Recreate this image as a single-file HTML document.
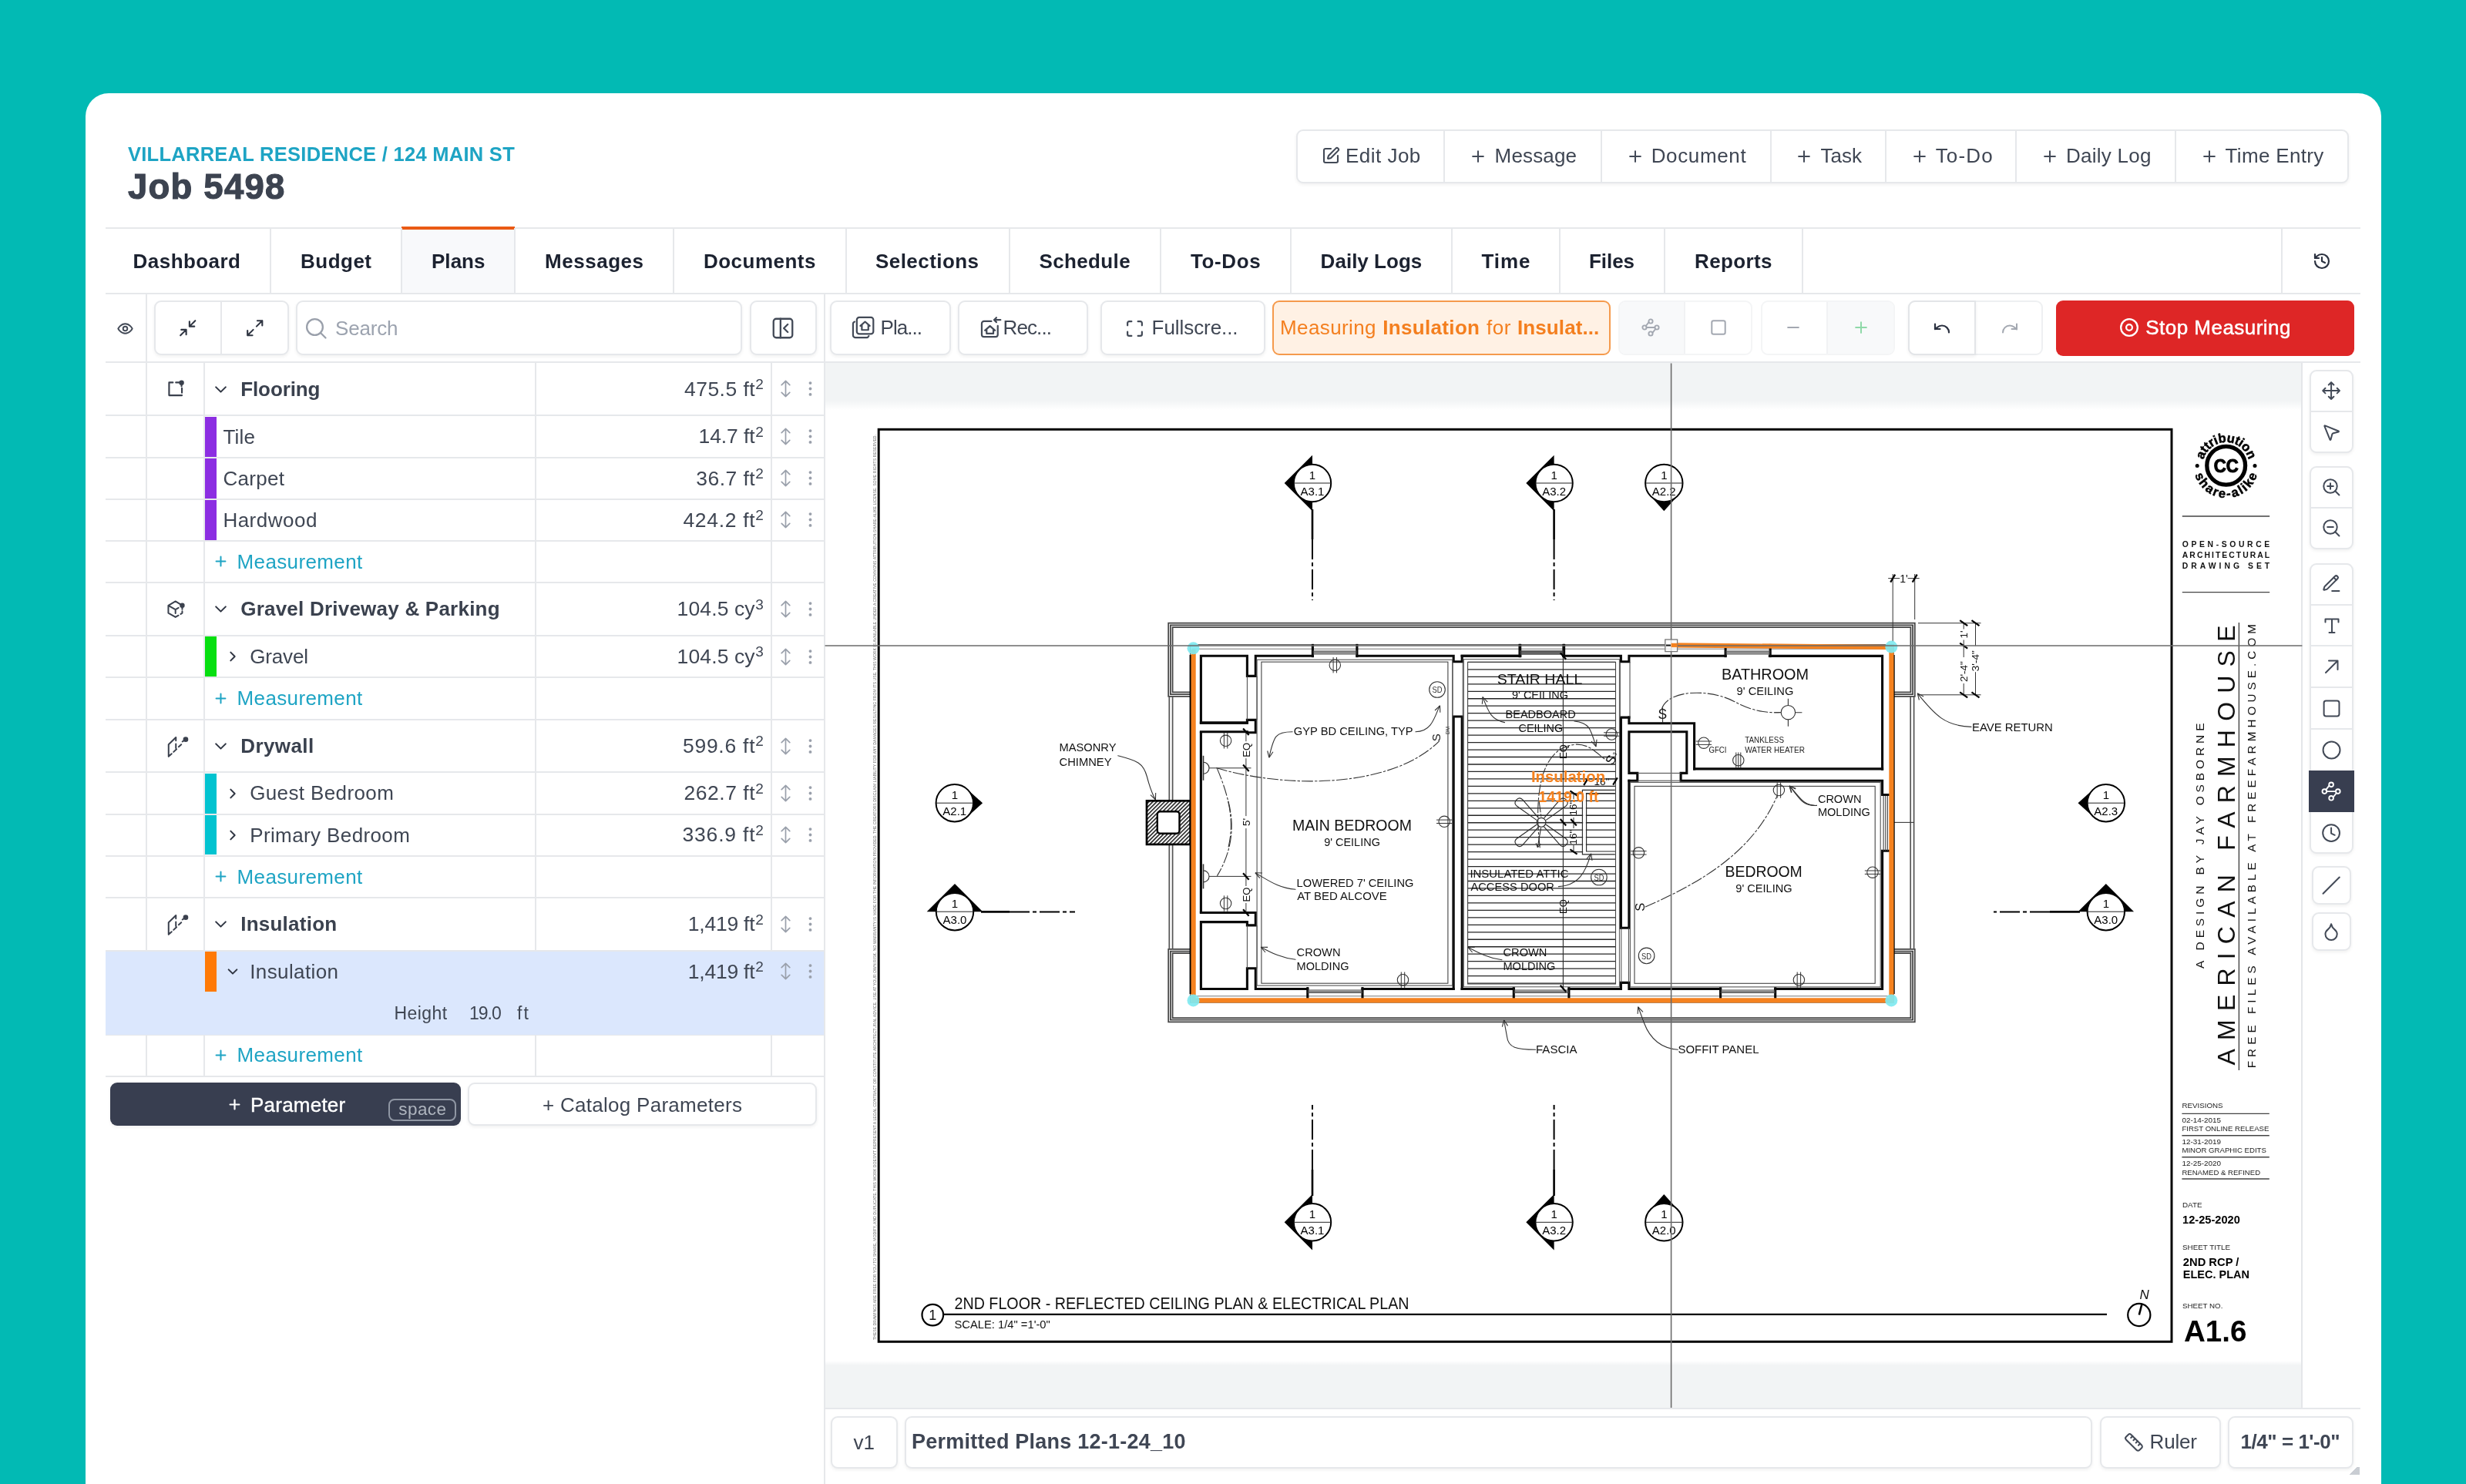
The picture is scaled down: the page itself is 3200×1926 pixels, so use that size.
<!DOCTYPE html>
<html lang="en"><head><meta charset="utf-8"><title>Job 5498 - Plans</title><style>
html,body{margin:0;padding:0;}
html{width:3200px;height:1926px;overflow:hidden;}
body{width:3200px;height:1926px;overflow:hidden;background:#02bab4;font-family:'Liberation Sans', sans-serif;position:relative;}
.b{position:absolute;box-sizing:border-box;}
.t{position:absolute;white-space:pre;font-family:'Liberation Sans', sans-serif;}
.i{position:absolute;overflow:visible;}
#dw{position:absolute;left:0;top:0;}
#root{position:absolute;left:0;top:0;width:3200px;height:1926px;overflow:hidden;will-change:transform;}
</style></head>
<body>
<div id="root">
<div class="b" style="left:111.0px;top:121.0px;width:2979.0px;height:1869.0px;background:#ffffff;border-radius:30px;"></div>
<div class="b" style="left:1682.0px;top:167.5px;width:1365.5px;height:70.0px;background:#fff;border:2px solid #e6e8eb;border-radius:9px;box-shadow:0 2px 4px rgba(0,0,0,0.06);"></div>
<div class="b" style="left:1873.3px;top:169.0px;width:2.0px;height:67.0px;background:#e6e8eb;"></div>
<div class="b" style="left:2077.0px;top:169.0px;width:2.0px;height:67.0px;background:#e6e8eb;"></div>
<div class="b" style="left:2296.6px;top:169.0px;width:2.0px;height:67.0px;background:#e6e8eb;"></div>
<div class="b" style="left:2445.8px;top:169.0px;width:2.0px;height:67.0px;background:#e6e8eb;"></div>
<div class="b" style="left:2615.0px;top:169.0px;width:2.0px;height:67.0px;background:#e6e8eb;"></div>
<div class="b" style="left:2822.0px;top:169.0px;width:2.0px;height:67.0px;background:#e6e8eb;"></div>
<div class="b" style="left:137.0px;top:294.6px;width:2926.0px;height:2.0px;background:#e6e8eb;"></div>
<div class="b" style="left:137.0px;top:379.8px;width:2926.0px;height:2.0px;background:#e6e8eb;"></div>
<div class="b" style="left:521.0px;top:296.6px;width:147.4px;height:83.4px;background:#f8f9fb;"></div>
<div class="b" style="left:521.0px;top:293.6px;width:147.4px;height:4.0px;background:#ea5a14;"></div>
<div class="b" style="left:350.0px;top:296.0px;width:2.0px;height:84.0px;background:#e6e8eb;"></div>
<div class="b" style="left:520.0px;top:296.0px;width:2.0px;height:84.0px;background:#e6e8eb;"></div>
<div class="b" style="left:667.4px;top:296.0px;width:2.0px;height:84.0px;background:#e6e8eb;"></div>
<div class="b" style="left:872.5px;top:296.0px;width:2.0px;height:84.0px;background:#e6e8eb;"></div>
<div class="b" style="left:1097.0px;top:296.0px;width:2.0px;height:84.0px;background:#e6e8eb;"></div>
<div class="b" style="left:1308.5px;top:296.0px;width:2.0px;height:84.0px;background:#e6e8eb;"></div>
<div class="b" style="left:1504.5px;top:296.0px;width:2.0px;height:84.0px;background:#e6e8eb;"></div>
<div class="b" style="left:1673.7px;top:296.0px;width:2.0px;height:84.0px;background:#e6e8eb;"></div>
<div class="b" style="left:1882.6px;top:296.0px;width:2.0px;height:84.0px;background:#e6e8eb;"></div>
<div class="b" style="left:2022.7px;top:296.0px;width:2.0px;height:84.0px;background:#e6e8eb;"></div>
<div class="b" style="left:2159.0px;top:296.0px;width:2.0px;height:84.0px;background:#e6e8eb;"></div>
<div class="b" style="left:2337.5px;top:296.0px;width:2.0px;height:84.0px;background:#e6e8eb;"></div>
<div class="b" style="left:2959.8px;top:296.0px;width:2.0px;height:84.0px;background:#e6e8eb;"></div>
<div class="b" style="left:137.0px;top:469.4px;width:2926.0px;height:2.0px;background:#e6e8eb;"></div>
<div class="b" style="left:189.0px;top:381.0px;width:2.0px;height:1016.0px;background:#e6e8eb;"></div>
<div class="b" style="left:1068.6px;top:381.0px;width:2.0px;height:1545.0px;background:#e6e8eb;"></div>
<div class="b" style="left:199.8px;top:390.4px;width:175.0px;height:70.8px;background:#fff;border:2px solid #e6e8eb;border-radius:9px;box-shadow:0 2px 4px rgba(0,0,0,0.06);"></div>
<div class="b" style="left:286.3px;top:392.4px;width:2.0px;height:66.8px;background:#e6e8eb;"></div>
<div class="b" style="left:384.0px;top:390.4px;width:578.6px;height:70.8px;background:#fff;border:2px solid #e6e8eb;border-radius:9px;box-shadow:0 2px 4px rgba(0,0,0,0.06);"></div>
<div class="b" style="left:973.2px;top:390.4px;width:86.8px;height:70.8px;background:#fff;border:2px solid #e6e8eb;border-radius:9px;box-shadow:0 2px 4px rgba(0,0,0,0.06);"></div>
<div class="b" style="left:1077.3px;top:390.2px;width:157.0px;height:70.8px;background:#fff;border:2px solid #e6e8eb;border-radius:9px;box-shadow:0 2px 4px rgba(0,0,0,0.06);"></div>
<div class="b" style="left:1243.2px;top:390.2px;width:168.6px;height:70.8px;background:#fff;border:2px solid #e6e8eb;border-radius:9px;box-shadow:0 2px 4px rgba(0,0,0,0.06);"></div>
<div class="b" style="left:1427.7px;top:390.2px;width:214.2px;height:70.8px;background:#fff;border:2px solid #e6e8eb;border-radius:9px;box-shadow:0 2px 4px rgba(0,0,0,0.06);"></div>
<div class="b" style="left:1651.0px;top:390.2px;width:438.6px;height:70.8px;background:#fff1e4;border:2.5px solid #f59a4c;border-radius:9px;"></div>
<div class="b" style="left:2100.0px;top:390.2px;width:174.0px;height:70.8px;background:#fff;border:2px solid #f4f5f6;border-radius:9px;"></div>
<div class="b" style="left:2102.0px;top:392.2px;width:84.0px;height:66.8px;background:#f8f9fa;border-radius:7px 0 0 7px;"></div>
<div class="b" style="left:2185.0px;top:392.0px;width:2.0px;height:67.0px;background:#f1f2f4;"></div>
<div class="b" style="left:2284.5px;top:390.2px;width:174.5px;height:70.8px;background:#fff;border:2px solid #f4f5f6;border-radius:9px;"></div>
<div class="b" style="left:2371.0px;top:392.2px;width:86.0px;height:66.8px;background:#f8f9fa;border-radius:0 7px 7px 0;"></div>
<div class="b" style="left:2370.0px;top:392.0px;width:2.0px;height:67.0px;background:#f1f2f4;"></div>
<div class="b" style="left:2475.6px;top:390.2px;width:175.7px;height:70.8px;background:#fff;border:2px solid #eef0f2;border-radius:9px;"></div>
<div class="b" style="left:2475.6px;top:390.2px;width:88.7px;height:70.8px;background:#fff;border:2px solid #e3e5e8;border-radius:9px 0 0 9px;box-shadow:0 2px 4px rgba(0,0,0,0.06);"></div>
<div class="b" style="left:2667.8px;top:389.6px;width:387.6px;height:72.2px;background:#de2626;border-radius:9px;"></div>
<div class="b" style="left:137.0px;top:538.4px;width:932.0px;height:2.0px;background:#e6e8eb;"></div>
<div class="b" style="left:137.0px;top:592.8px;width:932.0px;height:2.0px;background:#e6e8eb;"></div>
<div class="b" style="left:137.0px;top:646.8px;width:932.0px;height:2.0px;background:#e6e8eb;"></div>
<div class="b" style="left:137.0px;top:701.0px;width:932.0px;height:2.0px;background:#e6e8eb;"></div>
<div class="b" style="left:137.0px;top:754.9px;width:932.0px;height:2.0px;background:#e6e8eb;"></div>
<div class="b" style="left:137.0px;top:823.8px;width:932.0px;height:2.0px;background:#e6e8eb;"></div>
<div class="b" style="left:137.0px;top:878.2px;width:932.0px;height:2.0px;background:#e6e8eb;"></div>
<div class="b" style="left:137.0px;top:932.6px;width:932.0px;height:2.0px;background:#e6e8eb;"></div>
<div class="b" style="left:137.0px;top:1001.3px;width:932.0px;height:2.0px;background:#e6e8eb;"></div>
<div class="b" style="left:137.0px;top:1055.7px;width:932.0px;height:2.0px;background:#e6e8eb;"></div>
<div class="b" style="left:137.0px;top:1109.6px;width:932.0px;height:2.0px;background:#e6e8eb;"></div>
<div class="b" style="left:137.0px;top:1164.0px;width:932.0px;height:2.0px;background:#e6e8eb;"></div>
<div class="b" style="left:137.0px;top:1232.5px;width:932.0px;height:2.0px;background:#e6e8eb;"></div>
<div class="b" style="left:137.0px;top:1287.0px;width:932.0px;height:2.0px;background:#e6e8eb;"></div>
<div class="b" style="left:137.0px;top:1341.5px;width:932.0px;height:2.0px;background:#e6e8eb;"></div>
<div class="b" style="left:137.0px;top:1395.5px;width:932.0px;height:2.0px;background:#e6e8eb;"></div>
<div class="b" style="left:137.0px;top:1234.5px;width:932.0px;height:108.0px;background:#dbe7fd;"></div>
<div class="b" style="left:264.0px;top:471.0px;width:2.0px;height:763.0px;background:#e6e8eb;"></div>
<div class="b" style="left:264.0px;top:1342.5px;width:2.0px;height:54.5px;background:#e6e8eb;"></div>
<div class="b" style="left:693.6px;top:471.0px;width:2.0px;height:763.0px;background:#e6e8eb;"></div>
<div class="b" style="left:693.6px;top:1342.5px;width:2.0px;height:54.5px;background:#e6e8eb;"></div>
<div class="b" style="left:1000.3px;top:471.0px;width:2.0px;height:763.0px;background:#e6e8eb;"></div>
<div class="b" style="left:1000.3px;top:1342.5px;width:2.0px;height:54.5px;background:#e6e8eb;"></div>
<div class="b" style="left:266.0px;top:540.6px;width:14.6px;height:52.0px;background:#8c2ee2;"></div>
<div class="b" style="left:266.0px;top:595.0px;width:14.6px;height:51.6px;background:#8c2ee2;"></div>
<div class="b" style="left:266.0px;top:649.0px;width:14.6px;height:51.8px;background:#8c2ee2;"></div>
<div class="b" style="left:266.0px;top:826.0px;width:14.6px;height:52.0px;background:#06df10;"></div>
<div class="b" style="left:266.0px;top:1003.5px;width:14.6px;height:52.0px;background:#02c3d0;"></div>
<div class="b" style="left:266.0px;top:1057.9px;width:14.6px;height:51.5px;background:#02c3d0;"></div>
<div class="b" style="left:266.0px;top:1234.7px;width:14.6px;height:52.1px;background:#ff7a06;"></div>
<div class="b" style="left:142.6px;top:1405.4px;width:455.4px;height:55.2px;background:#383e50;border-radius:9px;box-shadow:0 2px 4px rgba(0,0,0,0.06);"></div>
<div class="b" style="left:503.6px;top:1426.2px;width:88.6px;height:29.2px;background:transparent;border:2px solid #8f96a3;border-radius:8px;"></div>
<div class="b" style="left:607.0px;top:1405.4px;width:453.0px;height:55.2px;background:#fff;border:2px solid #e6e8eb;border-radius:9px;box-shadow:0 2px 4px rgba(0,0,0,0.06);"></div>
<div class="b" style="left:1070.6px;top:471.4px;width:1916.8px;height:1355.6px;background:#f2f4f5;"></div>
<div class="b" style="left:1070.6px;top:520.0px;width:1916.8px;height:1252.0px;background:#ffffff;background:linear-gradient(#f2f4f5 0,#fff 12px,#fff calc(100% - 6px),#f2f4f5 100%);"></div>
<div class="b" style="left:2986.4px;top:471.0px;width:2.0px;height:1356.0px;background:#e4e6e9;"></div>
<div class="b" style="left:1069.0px;top:1826.6px;width:1994.0px;height:2.0px;background:#e6e8eb;"></div>
<div class="b" style="left:1077.6px;top:1838.0px;width:87.8px;height:67.8px;background:#fff;border:2px solid #e6e8eb;border-radius:9px;box-shadow:0 2px 4px rgba(0,0,0,0.06);"></div>
<div class="b" style="left:1174.2px;top:1838.0px;width:1541.0px;height:67.8px;background:#fff;border:2px solid #e6e8eb;border-radius:9px;box-shadow:0 2px 4px rgba(0,0,0,0.06);"></div>
<div class="b" style="left:2725.0px;top:1838.0px;width:156.7px;height:67.8px;background:#fff;border:2px solid #e6e8eb;border-radius:9px;box-shadow:0 2px 4px rgba(0,0,0,0.06);"></div>
<div class="b" style="left:2890.6px;top:1838.0px;width:163.7px;height:67.8px;background:#fff;border:2px solid #e6e8eb;border-radius:9px;box-shadow:0 2px 4px rgba(0,0,0,0.06);"></div>
<div class="b" style="left:2996.6px;top:479.6px;width:57.8px;height:108.0px;background:#fff;border:2px solid #e6e8eb;border-radius:9px;box-shadow:0 2px 4px rgba(0,0,0,0.06);"></div>
<div class="b" style="left:2998.0px;top:532.5px;width:55.0px;height:2.0px;background:#e6e8eb;"></div>
<div class="b" style="left:2996.6px;top:605.0px;width:57.8px;height:107.8px;background:#fff;border:2px solid #e6e8eb;border-radius:9px;box-shadow:0 2px 4px rgba(0,0,0,0.06);"></div>
<div class="b" style="left:2998.0px;top:658.0px;width:55.0px;height:2.0px;background:#e6e8eb;"></div>
<div class="b" style="left:2996.6px;top:730.6px;width:57.8px;height:377.4px;background:#fff;border:2px solid #e6e8eb;border-radius:9px;box-shadow:0 2px 4px rgba(0,0,0,0.06);"></div>
<div class="b" style="left:2998.0px;top:783.5px;width:55.0px;height:2.0px;background:#e6e8eb;"></div>
<div class="b" style="left:2998.0px;top:837.4px;width:55.0px;height:2.0px;background:#e6e8eb;"></div>
<div class="b" style="left:2998.0px;top:891.3px;width:55.0px;height:2.0px;background:#e6e8eb;"></div>
<div class="b" style="left:2998.0px;top:945.2px;width:55.0px;height:2.0px;background:#e6e8eb;"></div>
<div class="b" style="left:2995.6px;top:999.6px;width:59.8px;height:54.4px;background:#383e50;"></div>
<div class="b" style="left:3000.4px;top:1124.3px;width:50.6px;height:49.9px;background:#fff;border:2px solid #e6e8eb;border-radius:9px;box-shadow:0 2px 4px rgba(0,0,0,0.06);"></div>
<div class="b" style="left:3000.4px;top:1184.0px;width:50.6px;height:50.4px;background:#fff;border:2px solid #e6e8eb;border-radius:9px;box-shadow:0 2px 4px rgba(0,0,0,0.06);"></div>
<svg id="dw" width="3200" height="1926" viewBox="0 0 3200 1926" font-family="'Liberation Sans', sans-serif" fill="none"><defs><pattern id="ht" width="3.6" height="3.6" patternUnits="userSpaceOnUse" patternTransform="rotate(-45)"><rect width="3.6" height="3.6" fill="#fff"/><rect width="3.6" height="1.5" fill="#111"/></pattern><clipPath id="cv"><rect x="1070.6" y="471.4" width="1916.8" height="1355.6"/></clipPath></defs><g clip-path="url(#cv)"><rect x="1140.2" y="557.3" width="1677.8" height="1184" stroke="#050505" stroke-width="3" fill="none"/>
<text x="1136.6" y="1739.0" font-size="4.6" font-weight="400" text-anchor="start" fill="#6e6e6e" textLength="1175.0" lengthAdjust="spacingAndGlyphs" transform="rotate(-90 1136.6 1739.0)">THESE DRAWINGS ARE FREE FOR YOU TO SHARE, MODIFY, AND DUPLICATE.  THIS WORK DOESN'T REPRESENT A LEGAL CONTRACT OR CONSTITUTE ARCHITECTURAL ADVICE.  USE AT YOUR OWN RISK.  NO WARRANTY IS MADE FOR THE INFORMATION PROVIDED.  THE CREATORS DISCLAIM LIABILITY FOR ANY DAMAGES RESULTING FROM ITS USE.  THIS WORK IS AVAILABLE UNDER A CREATIVE COMMONS ATTRIBUTION-SHARE-ALIKE LICENSE.  SOME RIGHTS RESERVED.</text>
<circle cx="1210.3" cy="1706.6" r="13.8" fill="#fff" stroke="#000" stroke-width="2.2"/>
<text x="1210.3" y="1713.2" font-size="18" font-weight="400" text-anchor="middle" fill="#111">1</text>
<path d="M1224 1705.9H2734" stroke="#000" stroke-width="2.2"/>
<text x="1238.5" y="1698.9" font-size="21.3" font-weight="400" text-anchor="start" fill="#111" textLength="590.0" lengthAdjust="spacingAndGlyphs">2ND FLOOR - REFLECTED CEILING PLAN &amp; ELECTRICAL PLAN</text>
<text x="1238.5" y="1723.8" font-size="14.8" font-weight="400" text-anchor="start" fill="#111" textLength="124.3" lengthAdjust="spacingAndGlyphs">SCALE: 1/4" =1'-0"</text>
<circle cx="2775.8" cy="1706.5" r="14.6" stroke="#000" stroke-width="2.2" fill="none"/>
<path d="M2775.8 1706.5L2779.3 1693" stroke="#000" stroke-width="2.6"/>
<text x="2776.5" y="1685.6" font-size="17" font-weight="400" text-anchor="start" fill="#111" font-style="italic">N</text>
<path d="M1703.0 590.7L1666.7 627.0L1703.0 663.3Z" fill="#000"/>
<circle cx="1703.0" cy="627.0" r="24.2" fill="#fff" stroke="#000" stroke-width="2"/>
<path d="M1678.8 627.0H1727.2" stroke="#222" stroke-width="1"/>
<text x="1703.0" y="621.5" font-size="15" font-weight="400" text-anchor="middle" fill="#000">1</text>
<text x="1703.0" y="642.6" font-size="15" font-weight="400" text-anchor="middle" fill="#000">A3.1</text>
<path d="M1703 661V700" stroke="#000" stroke-width="2.6"/>
<path d="M1703 700V779" stroke="#000" stroke-width="2" stroke-dasharray="26 4 5 4"/>
<path d="M1703.0 1550.0L1666.7 1586.3L1703.0 1622.6Z" fill="#000"/>
<circle cx="1703.0" cy="1586.3" r="24.2" fill="#fff" stroke="#000" stroke-width="2"/>
<path d="M1678.8 1586.3H1727.2" stroke="#222" stroke-width="1"/>
<text x="1703.0" y="1580.8" font-size="15" font-weight="400" text-anchor="middle" fill="#000">1</text>
<text x="1703.0" y="1601.9" font-size="15" font-weight="400" text-anchor="middle" fill="#000">A3.1</text>
<path d="M1703 1552V1518" stroke="#000" stroke-width="2.6"/>
<path d="M1703 1518V1434" stroke="#000" stroke-width="2" stroke-dasharray="26 4 5 4"/>
<path d="M2016.6 590.7L1980.3 627.0L2016.6 663.3Z" fill="#000"/>
<circle cx="2016.6" cy="627.0" r="24.2" fill="#fff" stroke="#000" stroke-width="2"/>
<path d="M1992.4 627.0H2040.8" stroke="#222" stroke-width="1"/>
<text x="2016.6" y="621.5" font-size="15" font-weight="400" text-anchor="middle" fill="#000">1</text>
<text x="2016.6" y="642.6" font-size="15" font-weight="400" text-anchor="middle" fill="#000">A3.2</text>
<path d="M2016.6 661V700" stroke="#000" stroke-width="2.6"/>
<path d="M2016.6 700V779" stroke="#000" stroke-width="2" stroke-dasharray="26 4 5 4"/>
<path d="M2016.6 1550.0L1980.3 1586.3L2016.6 1622.6Z" fill="#000"/>
<circle cx="2016.6" cy="1586.3" r="24.2" fill="#fff" stroke="#000" stroke-width="2"/>
<path d="M1992.4 1586.3H2040.8" stroke="#222" stroke-width="1"/>
<text x="2016.6" y="1580.8" font-size="15" font-weight="400" text-anchor="middle" fill="#000">1</text>
<text x="2016.6" y="1601.9" font-size="15" font-weight="400" text-anchor="middle" fill="#000">A3.2</text>
<path d="M2016.6 1552V1518" stroke="#000" stroke-width="2.6"/>
<path d="M2016.6 1518V1434" stroke="#000" stroke-width="2" stroke-dasharray="26 4 5 4"/>
<path d="M2137.5 639.1L2159.3 663.3L2181.1 639.1Z" fill="#000"/>
<circle cx="2159.3" cy="627.0" r="24.2" fill="#fff" stroke="#000" stroke-width="2"/>
<path d="M2135.1 627.0H2183.5" stroke="#222" stroke-width="1"/>
<text x="2159.3" y="621.5" font-size="15" font-weight="400" text-anchor="middle" fill="#000">1</text>
<text x="2159.3" y="642.6" font-size="15" font-weight="400" text-anchor="middle" fill="#000">A2.2</text>
<path d="M2137.5 1574.2L2159.3 1550.0L2181.1 1574.2Z" fill="#000"/>
<circle cx="2159.3" cy="1586.3" r="24.2" fill="#fff" stroke="#000" stroke-width="2"/>
<path d="M2135.1 1586.3H2183.5" stroke="#222" stroke-width="1"/>
<text x="2159.3" y="1580.8" font-size="15" font-weight="400" text-anchor="middle" fill="#000">1</text>
<text x="2159.3" y="1601.9" font-size="15" font-weight="400" text-anchor="middle" fill="#000">A2.0</text>
<path d="M1250.9 1020.4L1275.1 1042.2L1250.9 1064.0Z" fill="#000"/>
<circle cx="1238.8" cy="1042.2" r="24.2" fill="#fff" stroke="#000" stroke-width="2"/>
<path d="M1214.6 1042.2H1263.0" stroke="#222" stroke-width="1"/>
<text x="1238.8" y="1036.7" font-size="15" font-weight="400" text-anchor="middle" fill="#000">1</text>
<text x="1238.8" y="1057.8" font-size="15" font-weight="400" text-anchor="middle" fill="#000">A2.1</text>
<path d="M2720.7 1020.4L2696.5 1042.2L2720.7 1064.0Z" fill="#000"/>
<circle cx="2732.8" cy="1042.2" r="24.2" fill="#fff" stroke="#000" stroke-width="2"/>
<path d="M2708.6 1042.2H2757.0" stroke="#222" stroke-width="1"/>
<text x="2732.8" y="1036.7" font-size="15" font-weight="400" text-anchor="middle" fill="#000">1</text>
<text x="2732.8" y="1057.8" font-size="15" font-weight="400" text-anchor="middle" fill="#000">A2.3</text>
<path d="M1202.7 1183.2L1239.0 1146.9L1275.3 1183.2Z" fill="#000"/>
<circle cx="1239.0" cy="1183.2" r="24.2" fill="#fff" stroke="#000" stroke-width="2"/>
<path d="M1214.8 1183.2H1263.2" stroke="#222" stroke-width="1"/>
<text x="1239.0" y="1177.7" font-size="15" font-weight="400" text-anchor="middle" fill="#000">1</text>
<text x="1239.0" y="1198.8" font-size="15" font-weight="400" text-anchor="middle" fill="#000">A3.0</text>
<path d="M1273 1183.4H1310" stroke="#000" stroke-width="2.6"/><path d="M1310 1183.4H1395" stroke="#000" stroke-width="2" stroke-dasharray="26 4 5 4"/>
<path d="M2696.5 1183.2L2732.8 1146.9L2769.1 1183.2Z" fill="#000"/>
<circle cx="2732.8" cy="1183.2" r="24.2" fill="#fff" stroke="#000" stroke-width="2"/>
<path d="M2708.6 1183.2H2757.0" stroke="#222" stroke-width="1"/>
<text x="2732.8" y="1177.7" font-size="15" font-weight="400" text-anchor="middle" fill="#000">1</text>
<text x="2732.8" y="1198.8" font-size="15" font-weight="400" text-anchor="middle" fill="#000">A3.0</text>
<path d="M2699 1183.4H2660" stroke="#000" stroke-width="2.6"/><path d="M2660 1183.4H2587" stroke="#000" stroke-width="2" stroke-dasharray="26 4 5 4"/>
<circle cx="2888.7" cy="604.2" r="24.9" stroke="#000" stroke-width="5.3" fill="none"/>
<text x="2888.7" y="612.8000000000001" font-size="23.7" font-weight="700" text-anchor="middle" fill="#000" stroke="#000" stroke-width="1.1" textLength="32" lengthAdjust="spacingAndGlyphs">CC</text>
<path id="arcT" d="M2858.5 604.2A30.2 30.2 0 0 1 2918.8999999999996 604.2" fill="none"/>
<path id="arcB" d="M2846.5 604.2A42.2 42.2 0 0 0 2930.8999999999996 604.2" fill="none"/>
<text font-size="16.6" font-weight="700" fill="#000" stroke="#000" stroke-width="0.5"><textPath href="#arcT" startOffset="50%" text-anchor="middle" textLength="80" lengthAdjust="spacing">attribution</textPath></text>
<text font-size="16.6" font-weight="700" fill="#000" stroke="#000" stroke-width="0.5"><textPath href="#arcB" startOffset="50%" text-anchor="middle" textLength="108" lengthAdjust="spacing">share-alike</textPath></text>
<circle cx="2851.2" cy="604.5" r="2.5" fill="#000"/><circle cx="2926.0" cy="604.5" r="2.5" fill="#000"/>
<path d="M2831.8 670H2945.2M2831.8 768.6H2945.2" stroke="#444" stroke-width="1.4"/>
<text x="2831.8" y="710.4" font-size="10.4" font-weight="700" text-anchor="start" fill="#111" textLength="113.4" lengthAdjust="spacing">OPEN-SOURCE</text>
<text x="2831.8" y="724.2" font-size="10.4" font-weight="700" text-anchor="start" fill="#111" textLength="113.4" lengthAdjust="spacing">ARCHITECTURAL</text>
<text x="2831.8" y="738.0" font-size="10.4" font-weight="700" text-anchor="start" fill="#111" textLength="113.4" lengthAdjust="spacing">DRAWING SET</text>
<text x="2900.2" y="1382.5" font-size="32" font-weight="400" text-anchor="start" fill="#111" textLength="571.0" lengthAdjust="spacing" transform="rotate(-90 2900.2 1382.5)">AMERICAN FARMHOUSE</text>
<path d="M2905.4 808V1389" stroke="#444" stroke-width="1.4"/>
<text x="2860.2" y="1257.0" font-size="15.5" font-weight="400" text-anchor="start" fill="#111" textLength="318.5" lengthAdjust="spacing" transform="rotate(-90 2860.2 1257.0)">A DESIGN BY JAY OSBORNE</text>
<text x="2927.0" y="1386.3" font-size="15.2" font-weight="400" text-anchor="start" fill="#111" textLength="576.3" lengthAdjust="spacing" transform="rotate(-90 2927.0 1386.3)">FREE FILES AVAILABLE AT FREEFARMHOUSE.COM</text>
<text x="2831.4" y="1438.3" font-size="9.9" font-weight="400" text-anchor="start" fill="#222" textLength="53.2" lengthAdjust="spacingAndGlyphs">REVISIONS</text>
<path d="M2831.4 1445.4H2944.8" stroke="#444" stroke-width="1.4"/>
<path d="M2831.4 1473.7H2944.8" stroke="#444" stroke-width="1.4"/>
<path d="M2831.4 1501.7H2944.8" stroke="#444" stroke-width="1.4"/>
<path d="M2831.4 1530H2944.8" stroke="#444" stroke-width="1.4"/>
<text x="2831.4" y="1457.4" font-size="9.9" font-weight="400" text-anchor="start" fill="#222" textLength="50.7" lengthAdjust="spacingAndGlyphs">02-14-2015</text>
<text x="2831.4" y="1468.4" font-size="9.9" font-weight="400" text-anchor="start" fill="#222" textLength="113.0" lengthAdjust="spacingAndGlyphs">FIRST ONLINE RELEASE</text>
<text x="2831.4" y="1485.4" font-size="9.9" font-weight="400" text-anchor="start" fill="#222" textLength="50.7" lengthAdjust="spacingAndGlyphs">12-31-2019</text>
<text x="2831.4" y="1496.4" font-size="9.9" font-weight="400" text-anchor="start" fill="#222" textLength="109.5" lengthAdjust="spacingAndGlyphs">MINOR GRAPHIC EDITS</text>
<text x="2831.4" y="1513.4" font-size="9.9" font-weight="400" text-anchor="start" fill="#222" textLength="50.7" lengthAdjust="spacingAndGlyphs">12-25-2020</text>
<text x="2831.4" y="1524.7" font-size="9.9" font-weight="400" text-anchor="start" fill="#222" textLength="101.7" lengthAdjust="spacingAndGlyphs">RENAMED &amp; REFINED</text>
<text x="2832.0" y="1567.3" font-size="9.9" font-weight="400" text-anchor="start" fill="#222" textLength="25.5" lengthAdjust="spacingAndGlyphs">DATE</text>
<text x="2832.0" y="1587.5" font-size="14.4" font-weight="700" text-anchor="start" fill="#000" textLength="74.8" lengthAdjust="spacingAndGlyphs">12-25-2020</text>
<text x="2832.0" y="1621.8" font-size="9.9" font-weight="400" text-anchor="start" fill="#222" textLength="62.0" lengthAdjust="spacingAndGlyphs">SHEET TITLE</text>
<text x="2832.8" y="1642.7" font-size="14.8" font-weight="700" text-anchor="start" fill="#000" textLength="72.6" lengthAdjust="spacingAndGlyphs">2ND RCP /</text>
<text x="2832.8" y="1658.7" font-size="14.8" font-weight="700" text-anchor="start" fill="#000" textLength="86.1" lengthAdjust="spacingAndGlyphs">ELEC. PLAN</text>
<text x="2832.0" y="1697.7" font-size="9.9" font-weight="400" text-anchor="start" fill="#222" textLength="52.4" lengthAdjust="spacingAndGlyphs">SHEET NO.</text>
<text x="2833.9" y="1740.9" font-size="38" font-weight="700" text-anchor="start" fill="#000" textLength="81.5" lengthAdjust="spacingAndGlyphs">A1.6</text>
<path d="M1545 903.8H1516.2V808.7H2484.8V903.8H2457" stroke="#454545" stroke-width="1.75" fill="none"/>
<path d="M1545 1231.8H1516.2V1326.4H2484.8V1231.8H2457" stroke="#454545" stroke-width="1.75" fill="none"/>
<path d="M1545 901.0999999999999H1518.9V811.4000000000001H2482.1000000000004V901.0999999999999H2457" stroke="#454545" stroke-width="1.75" fill="none"/>
<path d="M1545 1234.5H1518.9V1323.7H2482.1000000000004V1234.5H2457" stroke="#454545" stroke-width="1.75" fill="none"/>
<path d="M1545 898.4H1521.6000000000001V814.1H2479.4V898.4H2457" stroke="#454545" stroke-width="1.75" fill="none"/>
<path d="M1545 1237.2H1521.6000000000001V1321.0H2479.4V1237.2H2457" stroke="#454545" stroke-width="1.75" fill="none"/>
<path d="M1517.3 904V1232" stroke="#555" stroke-width="1.7"/>
<path d="M1521.6 904V1232" stroke="#555" stroke-width="1.7"/>
<path d="M2479.2 904V1232" stroke="#555" stroke-width="1.7"/>
<path d="M2483.6 904V1232" stroke="#555" stroke-width="1.7"/>
<path d="M2457.6 1067.4H2484" stroke="#3a3a3a" stroke-width="1.1"/>
<path d="M1545 1067.4H1517" stroke="#3a3a3a" stroke-width="0"/>
<rect x="1544.6" y="836.7" width="912.6" height="464.4" stroke="#555" stroke-width="1.2" fill="none"/>
<rect x="1547.6" y="842.2" width="906.6" height="450.6" stroke="#777" stroke-width="1" fill="none"/>
<path d="M1544.8 850V1290" stroke="#000" stroke-width="2.4"/>
<path d="M2457.6 850V1290" stroke="#000" stroke-width="2.2"/>
<path d="M1618.4 938.1L1558.4 938.1L1558.4 851.2L1618.4 851.2L1618.4 877.4L1629.3 877.4L1629.3 851.2L1703.4 851.2" stroke="#0a0a0a" stroke-width="3.1" fill="none" stroke-linejoin="miter" stroke-linecap="square"/>
<path d="M1703.4 837.4L1703.4 851.6" stroke="#0a0a0a" stroke-width="3.1" fill="none" stroke-linejoin="miter" stroke-linecap="square"/>
<path d="M1760.9 837.4L1760.9 851.6" stroke="#0a0a0a" stroke-width="3.1" fill="none" stroke-linejoin="miter" stroke-linecap="square"/>
<path d="M1703.4 845.2L1760.9 845.2" stroke="#444" stroke-width="1.2" fill="none"/>
<path d="M1703.4 847.1L1760.9 847.1" stroke="#444" stroke-width="1.2" fill="none"/>
<path d="M1703.4 849.0L1760.9 849.0" stroke="#444" stroke-width="1.2" fill="none"/>
<path d="M1760.9 851.2L1886.2 851.2L1886.2 858.8L1897.2 858.8L1897.2 851.2L1972.7 851.2" stroke="#0a0a0a" stroke-width="3.1" fill="none" stroke-linejoin="miter" stroke-linecap="square"/>
<path d="M1972.7 837.4L1972.7 851.6" stroke="#0a0a0a" stroke-width="3.1" fill="none" stroke-linejoin="miter" stroke-linecap="square"/>
<path d="M2029.6 837.4L2029.6 851.6" stroke="#0a0a0a" stroke-width="3.1" fill="none" stroke-linejoin="miter" stroke-linecap="square"/>
<path d="M1972.7 845.2L2029.6 845.2" stroke="#444" stroke-width="1.2" fill="none"/>
<path d="M1972.7 847.1L2029.6 847.1" stroke="#444" stroke-width="1.2" fill="none"/>
<path d="M1972.7 849.0L2029.6 849.0" stroke="#444" stroke-width="1.2" fill="none"/>
<path d="M2028.9 851.2L2103.4 851.2L2103.4 858.8L2113.9 858.8L2113.9 851.2L2239.1 851.2" stroke="#0a0a0a" stroke-width="3.1" fill="none" stroke-linejoin="miter" stroke-linecap="square"/>
<path d="M2239.1 837.4L2239.1 851.6" stroke="#0a0a0a" stroke-width="3.1" fill="none" stroke-linejoin="miter" stroke-linecap="square"/>
<path d="M2297.2 837.4L2297.2 851.6" stroke="#0a0a0a" stroke-width="3.1" fill="none" stroke-linejoin="miter" stroke-linecap="square"/>
<path d="M2239.1 845.2L2297.2 845.2" stroke="#444" stroke-width="1.2" fill="none"/>
<path d="M2239.1 847.1L2297.2 847.1" stroke="#444" stroke-width="1.2" fill="none"/>
<path d="M2239.1 849.0L2297.2 849.0" stroke="#444" stroke-width="1.2" fill="none"/>
<path d="M2296.4 851.4L2442.6 851.4L2442.6 998.1" stroke="#0a0a0a" stroke-width="3.1" fill="none" stroke-linejoin="miter" stroke-linecap="square"/>
<path d="M2113.9 931.1L2113.9 938.8L2198.6 938.8L2198.6 997.9" stroke="#0a0a0a" stroke-width="3.1" fill="none" stroke-linejoin="miter" stroke-linecap="square"/>
<path d="M2198.6 997.9H2442.6" stroke="#0a0a0a" stroke-width="3.1" stroke-linecap="square"/>
<path d="M1558.4 938.1L1618.4 938.1L1618.4 934.4L1629.3 934.4L1629.3 950.8L1618.4 950.8L1618.4 949.7L1558.4 949.7" stroke="#0a0a0a" stroke-width="3.1" fill="none" stroke-linejoin="miter" stroke-linecap="square"/>
<path d="M1558.4 949.7V1184.5" stroke="#0a0a0a" stroke-width="3.1"/>
<path d="M1558.4 1184.5L1629.3 1184.5L1629.3 1200.9L1618.4 1200.9L1618.4 1196.6L1558.4 1196.6L1558.4 1283.5L1618.4 1283.5L1618.4 1256.8L1629.3 1256.8L1629.3 1283.5L1696.8 1283.5" stroke="#0a0a0a" stroke-width="3.1" fill="none" stroke-linejoin="miter" stroke-linecap="square"/>
<path d="M1696.8 1295.8L1696.8 1282.6" stroke="#0a0a0a" stroke-width="3.1" fill="none" stroke-linejoin="miter" stroke-linecap="square"/>
<path d="M1768.0 1295.8L1768.0 1282.6" stroke="#0a0a0a" stroke-width="3.1" fill="none" stroke-linejoin="miter" stroke-linecap="square"/>
<path d="M1696.8 1288.5L1768.0 1288.5" stroke="#444" stroke-width="1.2" fill="none"/>
<path d="M1696.8 1286.8L1768.0 1286.8" stroke="#444" stroke-width="1.2" fill="none"/>
<path d="M1696.8 1285.0L1768.0 1285.0" stroke="#444" stroke-width="1.2" fill="none"/>
<path d="M1768.0 1283.5L1886.2 1283.5" stroke="#0a0a0a" stroke-width="3.1" fill="none" stroke-linejoin="miter" stroke-linecap="square"/>
<path d="M1886.2 1283.5V930.0H1897.2V1283.5" stroke="#0a0a0a" stroke-width="3.1" fill="none" stroke-linecap="square"/>
<path d="M1885.1 859.3L1885.1 930.0" stroke="#444" stroke-width="1" fill="none"/>
<path d="M1898.2 859.3L1898.2 930.0" stroke="#444" stroke-width="1" fill="none"/>
<path d="M1897.1 1283.5L1964.3 1283.5" stroke="#0a0a0a" stroke-width="3.1" fill="none" stroke-linejoin="miter" stroke-linecap="square"/>
<path d="M1964.3 1295.8L1964.3 1282.6" stroke="#0a0a0a" stroke-width="3.1" fill="none" stroke-linejoin="miter" stroke-linecap="square"/>
<path d="M2035.9 1295.8L2035.9 1282.6" stroke="#0a0a0a" stroke-width="3.1" fill="none" stroke-linejoin="miter" stroke-linecap="square"/>
<path d="M1964.3 1288.5L2035.9 1288.5" stroke="#444" stroke-width="1.2" fill="none"/>
<path d="M1964.3 1286.8L2035.9 1286.8" stroke="#444" stroke-width="1.2" fill="none"/>
<path d="M1964.3 1285.0L2035.9 1285.0" stroke="#444" stroke-width="1.2" fill="none"/>
<path d="M2035.9 1283.5L2103.4 1283.5L2103.4 1275.4L2113.9 1275.4L2113.9 1283.5L2232.6 1283.5" stroke="#0a0a0a" stroke-width="3.1" fill="none" stroke-linejoin="miter" stroke-linecap="square"/>
<path d="M2232.6 1295.8L2232.6 1282.6" stroke="#0a0a0a" stroke-width="3.1" fill="none" stroke-linejoin="miter" stroke-linecap="square"/>
<path d="M2303.7 1295.8L2303.7 1282.6" stroke="#0a0a0a" stroke-width="3.1" fill="none" stroke-linejoin="miter" stroke-linecap="square"/>
<path d="M2232.6 1288.5L2303.7 1288.5" stroke="#444" stroke-width="1.2" fill="none"/>
<path d="M2232.6 1286.8L2303.7 1286.8" stroke="#444" stroke-width="1.2" fill="none"/>
<path d="M2232.6 1285.0L2303.7 1285.0" stroke="#444" stroke-width="1.2" fill="none"/>
<path d="M2303.7 1283.5H2442.6V1104.3H2450.6" stroke="#0a0a0a" stroke-width="3.1" fill="none" stroke-linecap="square"/>
<path d="M2444.1 1031.5V1104.3" stroke="#444" stroke-width="1.1"/>
<path d="M2446.8 1031.5V1104.3" stroke="#444" stroke-width="1.1"/>
<path d="M2449.4 1031.5V1104.3" stroke="#444" stroke-width="1.1"/>
<path d="M2450.6 1031.5H2442.6V1013.2H2181.1V1003.4H2188.8V949.7H2113.9V1003.4H2124.8V1013.2H2113.9" stroke="#0a0a0a" stroke-width="3.1" fill="none" stroke-linecap="square" stroke-linejoin="miter"/>
<path d="M2124.8 1003.4L2181.1 1003.4" stroke="#444" stroke-width="1" fill="none"/>
<path d="M2124.8 1013.2L2181.1 1013.2" stroke="#444" stroke-width="1" fill="none"/>
<path d="M2103.4 1204.2V931.1H2113.9" stroke="#0a0a0a" stroke-width="3.1" fill="none" stroke-linecap="square"/>
<path d="M2113.9 1013.2V1204.2H2103.4" stroke="#0a0a0a" stroke-width="3.1" fill="none" stroke-linecap="square"/>
<path d="M2102.3 859.3L2102.3 931.1" stroke="#444" stroke-width="1" fill="none"/>
<path d="M2115.0 859.3L2115.0 931.1" stroke="#444" stroke-width="1" fill="none"/>
<path d="M2103.8 1204.2L2103.8 1275.4" stroke="#444" stroke-width="1" fill="none"/>
<path d="M2113.4 1204.2L2113.4 1275.4" stroke="#444" stroke-width="1" fill="none"/>
<path d="M1618.4 877.4L1618.4 934.4" stroke="#444" stroke-width="1" fill="none"/>
<path d="M1631.1 877.4L1631.1 934.4" stroke="#444" stroke-width="1" fill="none"/>
<path d="M1618.4 1200.9L1618.4 1256.8" stroke="#444" stroke-width="1" fill="none"/>
<path d="M1631.1 1200.9L1631.1 1256.8" stroke="#444" stroke-width="1" fill="none"/>
<path d="M1897.1 851.2L1972.0 851.2" stroke="#0a0a0a" stroke-width="3.1" fill="none" stroke-linejoin="miter" stroke-linecap="square"/>
<path d="M1972.0 837.4L1972.0 851.6" stroke="#0a0a0a" stroke-width="3.1" fill="none" stroke-linejoin="miter" stroke-linecap="square"/>
<path d="M2028.9 837.4L2028.9 851.6" stroke="#0a0a0a" stroke-width="3.1" fill="none" stroke-linejoin="miter" stroke-linecap="square"/>
<path d="M1972.0 845.2L2028.9 845.2" stroke="#444" stroke-width="1.2" fill="none"/>
<path d="M1972.0 847.1L2028.9 847.1" stroke="#444" stroke-width="1.2" fill="none"/>
<path d="M1972.0 849.0L2028.9 849.0" stroke="#444" stroke-width="1.2" fill="none"/>
<rect x="1631.1" y="856.2" width="253.6" height="422.9" stroke="#555" stroke-width="1.1" fill="none"/>
<rect x="1636.9" y="859.1" width="242.0" height="417.1" stroke="#444" stroke-width="1.1" fill="none"/>
<rect x="2115.4" y="1015.4" width="324.8" height="265.5" stroke="#555" stroke-width="1.1" fill="none"/>
<rect x="2121.0" y="1020.4" width="312.2" height="255.9" stroke="#444" stroke-width="1.1" fill="none"/>
<path d="M1904.6 859.40H2096.5M1904.6 868.87H2096.5M1904.6 878.34H2096.5M1904.6 887.81H2096.5M1904.6 897.28H2096.5M1904.6 906.75H2096.5M1904.6 916.22H2096.5M1904.6 925.69H2096.5M1904.6 935.16H2096.5M1904.6 944.63H2096.5M1904.6 954.10H2096.5M1904.6 963.57H2096.5M1904.6 973.04H2096.5M1904.6 982.51H2096.5M1904.6 991.98H2096.5M1904.6 1001.45H2096.5M1904.6 1010.92H2096.5M1904.6 1020.39H2096.5M1904.6 1029.86H2096.5M1904.6 1039.33H2096.5M1904.6 1048.80H2096.5M1904.6 1058.27H2096.5M1904.6 1067.74H2096.5M1904.6 1077.21H2096.5M1904.6 1086.68H2096.5M1904.6 1096.15H2096.5M1904.6 1105.62H2096.5M1904.6 1115.09H2096.5M1904.6 1124.56H2096.5M1904.6 1134.03H2096.5M1904.6 1143.50H2096.5M1904.6 1152.97H2096.5M1904.6 1162.44H2096.5M1904.6 1171.91H2096.5M1904.6 1181.38H2096.5M1904.6 1190.85H2096.5M1904.6 1200.32H2096.5M1904.6 1209.79H2096.5M1904.6 1219.26H2096.5M1904.6 1228.73H2096.5M1904.6 1238.20H2096.5M1904.6 1247.67H2096.5M1904.6 1257.14H2096.5M1904.6 1266.61H2096.5M1904.6 1276.08H2096.5" stroke="#262626" stroke-width="1.3"/>
<rect x="1904.6" y="859.4" width="191.9" height="417.6" stroke="#444" stroke-width="1.1" fill="none"/>
<rect x="1899.4" y="855.6" width="202" height="425.2" stroke="#555" stroke-width="1" fill="none"/>
<path d="M2095.8 1027.4H2056V1106.900H2095.800" stroke="#fff" stroke-width="3.6" fill="none"/>
<path d="M2095.8 1025.3H2053.4V1108.8H2095.8" stroke="#2a2a2a" stroke-width="1.15" fill="none"/>
<path d="M2095.8 1029.6H2058.6V1105H2095.8" stroke="#2a2a2a" stroke-width="1.15" fill="none"/>
<rect x="1488" y="1039.3" width="56.6" height="56.6" fill="url(#ht)" stroke="#000" stroke-width="2.7"/>
<rect x="1501.8" y="1053.2" width="28.7" height="28.5" rx="3.5" fill="#fff" stroke="#000" stroke-width="2.4"/>
<circle cx="1590.6" cy="1172.5" r="7.2" stroke="#333" stroke-width="1.1" fill="none"/>
<path d="M1588.4 1162.3V1182.7" stroke="#333" stroke-width="1"/>
<path d="M1592.8 1162.3V1182.7" stroke="#333" stroke-width="1"/>
<circle cx="1820.5" cy="1271.7" r="7.2" stroke="#333" stroke-width="1.1" fill="none"/>
<path d="M1818.3 1261.5V1281.9" stroke="#333" stroke-width="1"/>
<path d="M1822.7 1261.5V1281.9" stroke="#333" stroke-width="1"/>
<circle cx="1874.2" cy="1066.3" r="7.2" stroke="#333" stroke-width="1.1" fill="none"/>
<path d="M1864.0 1064.1H1884.4" stroke="#333" stroke-width="1"/>
<path d="M1864.0 1068.5H1884.4" stroke="#333" stroke-width="1"/>
<circle cx="1732.3" cy="863.2" r="7.2" stroke="#333" stroke-width="1.1" fill="none"/>
<path d="M1730.1 853.0V873.4" stroke="#333" stroke-width="1"/>
<path d="M1734.5 853.0V873.4" stroke="#333" stroke-width="1"/>
<circle cx="1590.6" cy="961.3" r="7.2" stroke="#333" stroke-width="1.1" fill="none"/>
<path d="M1588.4 951.1V971.5" stroke="#333" stroke-width="1"/>
<path d="M1592.8 951.1V971.5" stroke="#333" stroke-width="1"/>
<circle cx="2091.3" cy="953.0" r="7.2" stroke="#333" stroke-width="1.1" fill="none"/>
<path d="M2081.1 950.8H2101.5" stroke="#333" stroke-width="1"/>
<path d="M2081.1 955.2H2101.5" stroke="#333" stroke-width="1"/>
<circle cx="2126.4" cy="1106.8" r="7.2" stroke="#333" stroke-width="1.1" fill="none"/>
<path d="M2116.2 1104.6H2136.6" stroke="#333" stroke-width="1"/>
<path d="M2116.2 1109.0H2136.6" stroke="#333" stroke-width="1"/>
<circle cx="2334.4" cy="1271.7" r="7.2" stroke="#333" stroke-width="1.1" fill="none"/>
<path d="M2332.2 1261.5V1281.9" stroke="#333" stroke-width="1"/>
<path d="M2336.6 1261.5V1281.9" stroke="#333" stroke-width="1"/>
<circle cx="2210.9" cy="964.2" r="7.2" stroke="#333" stroke-width="1.1" fill="none"/>
<path d="M2200.7 962.0H2221.1" stroke="#333" stroke-width="1"/>
<path d="M2200.7 966.4H2221.1" stroke="#333" stroke-width="1"/>
<circle cx="2308.4" cy="1025.5" r="7.2" stroke="#333" stroke-width="1.1" fill="none"/>
<path d="M2306.2 1015.3V1035.7" stroke="#333" stroke-width="1"/>
<path d="M2310.6 1015.3V1035.7" stroke="#333" stroke-width="1"/>
<circle cx="2430.0" cy="1132.2" r="7.2" stroke="#333" stroke-width="1.1" fill="none"/>
<path d="M2419.8 1130.0H2440.2" stroke="#333" stroke-width="1"/>
<path d="M2419.8 1134.4H2440.2" stroke="#333" stroke-width="1"/>
<circle cx="2255.8" cy="986.7" r="7.2" stroke="#333" stroke-width="1.1" fill="none"/>
<path d="M2252.8 976.5V996.9" stroke="#333" stroke-width="1"/>
<path d="M2255.8 976.5V996.9" stroke="#333" stroke-width="1"/>
<path d="M2258.8 976.5V996.9" stroke="#333" stroke-width="1"/>
<circle cx="1865.0" cy="895.0" r="10.3" stroke="#333" stroke-width="1.1" fill="none"/>
<text x="1865.0" y="899.2" font-size="11.5" font-weight="400" text-anchor="middle" fill="#333" textLength="13.0" lengthAdjust="spacingAndGlyphs">SD</text>
<circle cx="2074.9" cy="1138.5" r="10.3" stroke="#333" stroke-width="1.1" fill="none"/>
<text x="2074.9" y="1142.7" font-size="11.5" font-weight="400" text-anchor="middle" fill="#333" textLength="13.0" lengthAdjust="spacingAndGlyphs">SD</text>
<circle cx="2136.6" cy="1240.4" r="10.3" stroke="#333" stroke-width="1.1" fill="none"/>
<text x="2136.6" y="1244.6" font-size="11.5" font-weight="400" text-anchor="middle" fill="#333" textLength="13.0" lengthAdjust="spacingAndGlyphs">SD</text>
<path d="M1561.5 989.3A7.5 7.5 0 0 1 1561.5 1004.3" stroke="#333" stroke-width="1.1" fill="none"/><path d="M1561.5 980.8V1012.8" stroke="#333" stroke-width="1.6"/>
<path d="M1569.0 996.8H1623.5" stroke="#333" stroke-width="1"/>
<path d="M1561.5 1129.9A7.5 7.5 0 0 1 1561.5 1144.9" stroke="#333" stroke-width="1.1" fill="none"/><path d="M1561.5 1121.4V1153.4" stroke="#333" stroke-width="1.6"/>
<path d="M1569.0 1137.4H1623.5" stroke="#333" stroke-width="1"/>
<circle cx="2320.4" cy="924.7" r="9.2" stroke="#333" stroke-width="1.1" fill="#fff"/><path d="M2320.4 906.7V915.5M2320.4 933.9V942.7M2302.4 924.7H2311.2M2329.6 924.7H2338.4" stroke="#333" stroke-width="1.1"/>
<path d="M6.5 -1.9L38 -5.6Q43.500 -5.8 43.500 0Q43.500 5.800 38 5.600L6.500 1.900" stroke="#2a2a2a" stroke-width="1.15" fill="none" transform="translate(2000.1 1067.3) rotate(42)"/>
<path d="M6.5 -1.9L38 -5.6Q43.500 -5.8 43.500 0Q43.500 5.800 38 5.600L6.500 1.900" stroke="#2a2a2a" stroke-width="1.15" fill="none" transform="translate(2000.1 1067.3) rotate(138)"/>
<path d="M6.5 -1.9L38 -5.6Q43.500 -5.8 43.500 0Q43.500 5.800 38 5.600L6.500 1.900" stroke="#2a2a2a" stroke-width="1.15" fill="none" transform="translate(2000.1 1067.3) rotate(222)"/>
<path d="M6.5 -1.9L38 -5.6Q43.500 -5.8 43.500 0Q43.500 5.800 38 5.600L6.500 1.900" stroke="#2a2a2a" stroke-width="1.15" fill="none" transform="translate(2000.1 1067.3) rotate(318)"/>
<circle cx="2000.1" cy="1067.3" r="5.9" fill="none" stroke="#2a2a2a" stroke-width="1.15"/>
<path d="M2006.1 1067.3H2050.6" stroke="#2a2a2a" stroke-width="1"/>
<path d="M1999.6 1074.3L1995.3 1099.3" stroke="#2a2a2a" stroke-width="1.1"/>
<path d="M1995.3 1099.8L1993.1 1094.2" stroke="#333" stroke-width="1.1"/>
<path d="M1995.3 1099.8L1999.3 1095.3" stroke="#333" stroke-width="1.1"/>
<text x="1868.7" y="962.2" font-size="15" font-weight="400" text-anchor="start" fill="#111" transform="rotate(-90 1868.7 962.2)">S</text>
<text x="1881.2" y="953.0" font-size="6.5" font-weight="400" text-anchor="start" fill="#333" transform="rotate(-90 1881.2 953.0)">DM</text>
<text x="2092.5" y="993.9" font-size="17" font-weight="400" text-anchor="start" fill="#111" transform="rotate(-60 2092.5 993.9)">S</text>
<text x="2096.5" y="981.5" font-size="7" font-weight="400" text-anchor="start" fill="#222" transform="rotate(-60 2096.5 981.5)">3</text>
<text x="2151.6" y="933.2" font-size="17.5" font-weight="400" text-anchor="start" fill="#111">S</text>
<path d="M2157.6 918.5V938.400" stroke="#222" stroke-width="1"/>
<text x="2134.5" y="1182.8" font-size="16.5" font-weight="400" text-anchor="start" fill="#111" transform="rotate(-90 2134.5 1182.8)">S</text>
<path d="M1578.5 996.8 C1677.1 1025.3 1808.5 1020.9 1867.6 961.8 " stroke="#333" stroke-width="1.1" fill="none" stroke-linecap="round" stroke-dasharray="14 3 2.500 3"/>
<path d="M1579.6 997.9 C1593.9 1031.8 1602.6 1064.7 1593.9 1099.9 " stroke="#333" stroke-width="1.1" fill="none" stroke-linecap="round" stroke-dasharray="14 3 2.500 3"/>
<path d="M1593.9 1040.0 C1602.6 1072.8 1598.2 1105.7 1579.6 1136.4 " stroke="#333" stroke-width="1.1" fill="none" stroke-linecap="round" stroke-dasharray="14 3 2.500 3"/>
<path d="M2156.4 920.1 C2164.7 893.9 2221.6 893.9 2252.3 911.4 C2274.2 923.4 2296.1 925.6 2310.3 924.5 " stroke="#333" stroke-width="1.1" fill="none" stroke-linecap="round" stroke-dasharray="14 3 2.500 3"/>
<path d="M1998.2 1099.9 C1989.5 1020.9 2002.6 968.3 2046.4 966.1 C2066.1 966.1 2077.1 983.6 2086.9 988.0 " stroke="#333" stroke-width="1.1" fill="none" stroke-linecap="round" stroke-dasharray="14 3 2.500 3"/>
<path d="M1997.2 1040.0 L2000.0 1060.8 " stroke="#333" stroke-width="1.1" fill="none" stroke-linecap="round" stroke-dasharray="14 3 2.500 3"/>
<path d="M2135.1 1176.9 C2208.5 1145.1 2274.2 1105.7 2305.9 1033.4 " stroke="#333" stroke-width="1.1" fill="none" stroke-linecap="round" stroke-dasharray="14 3 2.500 3"/>
<path d="M1677.1 949.7 C1655.2 949.7 1653.0 955.2 1646.9 982.6 " stroke="#333" stroke-width="1.1" fill="none" stroke-linecap="round"/>
<path d="M1646.9 983.2L1644.7 974.5" stroke="#333" stroke-width="1.1"/>
<path d="M1646.9 983.2L1651.9 975.8" stroke="#333" stroke-width="1.1"/>
<path d="M1836.9 949.7 C1856.6 949.7 1861.0 933.3 1868.0 916.2 " stroke="#333" stroke-width="1.1" fill="none" stroke-linecap="round"/>
<path d="M1868.5 915.8L1868.8 924.8" stroke="#333" stroke-width="1.1"/>
<path d="M1868.5 915.8L1862.0 922.0" stroke="#333" stroke-width="1.1"/>
<path d="M1450.7 980.8 C1474.0 987.0 1483.5 989.0 1488.4 1008.0 C1492.0 1022.0 1495.0 1030.0 1499.4 1037.9 " stroke="#333" stroke-width="1.1" fill="none" stroke-linecap="round"/>
<path d="M1499.4 1037.9L1492.9 1031.6" stroke="#333" stroke-width="1.1"/>
<path d="M1499.4 1037.9L1499.7 1028.9" stroke="#333" stroke-width="1.1"/>
<path d="M1681.0 1154.3 C1659.6 1152.8 1646.4 1142.9 1629.3 1133.1 " stroke="#333" stroke-width="1.1" fill="none" stroke-linecap="round"/>
<path d="M1628.9 1132.8L1637.9 1133.0" stroke="#333" stroke-width="1.1"/>
<path d="M1628.9 1132.8L1634.8 1139.6" stroke="#333" stroke-width="1.1"/>
<path d="M1681.0 1245.2 C1663.9 1243.6 1650.8 1237.1 1636.6 1229.4 " stroke="#333" stroke-width="1.1" fill="none" stroke-linecap="round"/>
<path d="M1636.1 1229.2L1645.1 1229.4" stroke="#333" stroke-width="1.1"/>
<path d="M1636.1 1229.2L1642.0 1236.0" stroke="#333" stroke-width="1.1"/>
<path d="M1949.0 1245.8 C1932.6 1243.6 1919.4 1237.1 1905.2 1229.4 " stroke="#333" stroke-width="1.1" fill="none" stroke-linecap="round"/>
<path d="M1904.7 1229.2L1913.7 1229.4" stroke="#333" stroke-width="1.1"/>
<path d="M1904.7 1229.2L1910.6 1236.0" stroke="#333" stroke-width="1.1"/>
<path d="M2022.3 1150.6 C2048.6 1149.5 2057.4 1132.0 2064.4 1108.3 " stroke="#333" stroke-width="1.1" fill="none" stroke-linecap="round"/>
<path d="M2064.6 1107.9L2066.0 1116.8" stroke="#333" stroke-width="1.1"/>
<path d="M2064.6 1107.9L2058.9 1114.9" stroke="#333" stroke-width="1.1"/>
<path d="M1952.5 937.6 C1935.0 934.0 1932.0 925.0 1924.0 904.7 " stroke="#333" stroke-width="1.1" fill="none" stroke-linecap="round"/>
<path d="M1924.0 904.7L1930.3 911.2" stroke="#333" stroke-width="1.1"/>
<path d="M1924.0 904.7L1923.4 913.7" stroke="#333" stroke-width="1.1"/>
<path d="M2043.0 936.0 C2062.0 938.0 2064.0 945.0 2071.0 968.8 " stroke="#333" stroke-width="1.1" fill="none" stroke-linecap="round"/>
<path d="M2071.1 968.8L2065.1 962.1" stroke="#333" stroke-width="1.1"/>
<path d="M2071.1 968.8L2072.0 959.8" stroke="#333" stroke-width="1.1"/>
<path d="M2357.4 1045.4 C2339.9 1046.1 2335.5 1034.0 2322.3 1020.4 " stroke="#333" stroke-width="1.1" fill="none" stroke-linecap="round"/>
<path d="M2321.9 1020.0L2330.3 1023.2" stroke="#333" stroke-width="1.1"/>
<path d="M2321.9 1020.0L2325.1 1028.4" stroke="#333" stroke-width="1.1"/>
<path d="M2357.2 1045.4 C2338.3 1046.1 2335.8 1036.4 2322.5 1020.6 " stroke="#333" stroke-width="1.1" fill="none" stroke-linecap="round"/>
<path d="M2322.0 1020.1L2330.1 1024.1" stroke="#333" stroke-width="1.1"/>
<path d="M2322.0 1020.1L2324.5 1028.8" stroke="#333" stroke-width="1.1"/>
<path d="M2558.0 943.4 C2524.1 942.3 2510.9 928.0 2488.6 900.4 " stroke="#333" stroke-width="1.1" fill="none" stroke-linecap="round"/>
<path d="M2488.2 899.8L2496.1 904.0" stroke="#333" stroke-width="1.1"/>
<path d="M2488.2 899.8L2490.4 908.5" stroke="#333" stroke-width="1.1"/>
<path d="M1992.8 1362.3 C1968.0 1362.3 1957.0 1360.0 1955.4 1344.7 L1951.6 1324.0 " stroke="#333" stroke-width="1.1" fill="none" stroke-linecap="round"/>
<path d="M1951.6 1323.9L1956.6 1331.4" stroke="#333" stroke-width="1.1"/>
<path d="M1951.6 1323.9L1949.4 1332.6" stroke="#333" stroke-width="1.1"/>
<path d="M2177.3 1362.3 C2152.0 1360.0 2140.0 1345.0 2133.5 1327.7 L2125.8 1307.0 " stroke="#333" stroke-width="1.1" fill="none" stroke-linecap="round"/>
<path d="M2125.7 1306.9L2132.0 1313.4" stroke="#333" stroke-width="1.1"/>
<path d="M2125.7 1306.9L2125.1 1315.9" stroke="#333" stroke-width="1.1"/>
<path d="M1616.9 949.7V1184.5" stroke="#333" stroke-width="1"/>
<path d="M1613.1 945.5L1620.6 954.0" stroke="#000" stroke-width="2.2"/>
<path d="M1613.1 992.5L1620.6 1001.0" stroke="#000" stroke-width="2.2"/>
<path d="M1613.1 1133.2L1620.6 1141.7" stroke="#000" stroke-width="2.2"/>
<path d="M1613.1 1180.3L1620.6 1188.8" stroke="#000" stroke-width="2.2"/>
<rect x="1609.9" y="962.2" width="14" height="22" fill="#fff"/><rect x="1609.9" y="1059.1" width="14" height="16" fill="#fff"/><rect x="1609.9" y="1150.0" width="14" height="22" fill="#fff"/>
<text x="1621.9" y="982.7" font-size="13.5" font-weight="400" text-anchor="start" fill="#111" textLength="19.0" lengthAdjust="spacingAndGlyphs" transform="rotate(-90 1621.9 982.7)">EQ</text>
<text x="1621.9" y="1072.1" font-size="13.5" font-weight="400" text-anchor="start" fill="#111" transform="rotate(-90 1621.9 1072.1)">5'</text>
<text x="1621.9" y="1170.5" font-size="13.5" font-weight="400" text-anchor="start" fill="#111" textLength="19.0" lengthAdjust="spacingAndGlyphs" transform="rotate(-90 1621.9 1170.5)">EQ</text>
<path d="M2028.4 851V1283.500" stroke="#2a2a2a" stroke-width="1.1"/>
<path d="M2024.7 847.2L2032.2 855.8" stroke="#000" stroke-width="2.2"/>
<path d="M2024.7 1278.8L2032.2 1287.2" stroke="#000" stroke-width="2.2"/>
<path d="M2024.7 1063.0L2032.2 1071.5" stroke="#000" stroke-width="2.2"/>
<path d="M2042 1029V1105" stroke="#2a2a2a" stroke-width="1" stroke-dasharray="8 24 14 22 100"/>
<path d="M2038.2 1063.0L2045.8 1071.5" stroke="#000" stroke-width="2.2"/>
<path d="M2037.4 1026.3L2046.6 1032.7" stroke="#000" stroke-width="2.2"/>
<path d="M2037.4 1102.3L2046.6 1108.7" stroke="#000" stroke-width="2.2"/>
<text x="2033.4" y="985.0" font-size="13.5" font-weight="400" text-anchor="start" fill="#111" textLength="19.0" lengthAdjust="spacingAndGlyphs" transform="rotate(-90 2033.4 985.0)">EQ</text>
<text x="2033.4" y="1186.0" font-size="13.5" font-weight="400" text-anchor="start" fill="#111" textLength="19.0" lengthAdjust="spacingAndGlyphs" transform="rotate(-90 2033.4 1186.0)">EQ</text>
<text x="2046.3" y="1058.5" font-size="13.5" font-weight="400" text-anchor="start" fill="#111" transform="rotate(-90 2046.3 1058.5)">16"</text>
<text x="2046.3" y="1096.5" font-size="13.5" font-weight="400" text-anchor="start" fill="#111" transform="rotate(-90 2046.3 1096.5)">16"</text>
<text x="2068.5" y="1019.4" font-size="13.5" font-weight="400" text-anchor="start" fill="#111">16"</text>
<path d="M2056 1011H2066M2086 1011H2098" stroke="#2a2a2a" stroke-width="1"/>
<path d="M2060.8 1009.9L2055.2 1019.1" stroke="#000" stroke-width="2.2"/>
<path d="M2098.8 1009.4L2093.2 1018.6" stroke="#000" stroke-width="2.2"/>
<path d="M2456.2 745V833M2484.7 745V804" stroke="#333" stroke-width="1"/>
<path d="M2450.2 750.600H2465.2M2475.7 750.600H2490.7" stroke="#333" stroke-width="1"/>
<path d="M2459.2 745.6L2453.2 755.6" stroke="#000" stroke-width="2.2"/>
<path d="M2487.7 745.6L2481.7 755.6" stroke="#000" stroke-width="2.2"/>
<text x="2470.4" y="756.0" font-size="14" font-weight="400" text-anchor="middle" fill="#111">1'</text>
<path d="M2489 808.7H2570.5M2489 901.8H2570.5" stroke="#333" stroke-width="1"/>
<path d="M2548.2 808.7V901.8M2563.5 808.7V901.8" stroke="#333" stroke-width="1"/>
<path d="M2543.2 805.2L2553.2 812.2" stroke="#000" stroke-width="2.2"/>
<path d="M2543.2 834.7L2553.2 841.7" stroke="#000" stroke-width="2.2"/>
<path d="M2543.2 898.3L2553.2 905.3" stroke="#000" stroke-width="2.2"/>
<path d="M2558.5 805.2L2568.5 812.2" stroke="#000" stroke-width="2.2"/>
<path d="M2558.5 898.3L2568.5 905.3" stroke="#000" stroke-width="2.2"/>
<rect x="2540.2" y="816.5" width="12" height="14" fill="#fff"/><rect x="2540.2" y="853.0" width="12" height="34" fill="#fff"/><rect x="2555.5" y="838.2" width="12" height="34" fill="#fff"/>
<text x="2552.7" y="828.5" font-size="13.5" font-weight="400" text-anchor="start" fill="#111" transform="rotate(-90 2552.7 828.5)">1'</text>
<text x="2552.7" y="885.0" font-size="13.5" font-weight="400" text-anchor="start" fill="#111" transform="rotate(-90 2552.7 885.0)">2'-4"</text>
<text x="2568.0" y="871.2" font-size="13.5" font-weight="400" text-anchor="start" fill="#111" transform="rotate(-90 2568.0 871.2)">3'-4"</text>
<text x="1677.1" y="1078.3" font-size="19.3" font-weight="400" text-anchor="start" fill="#111" textLength="154.8" lengthAdjust="spacingAndGlyphs">MAIN BEDROOM</text>
<text x="1718.2" y="1098.0" font-size="14.6" font-weight="400" text-anchor="start" fill="#111" textLength="72.7" lengthAdjust="spacingAndGlyphs">9' CEILING</text>
<text x="1682.6" y="1150.6" font-size="14.4" font-weight="400" text-anchor="start" fill="#111" textLength="151.8" lengthAdjust="spacingAndGlyphs">LOWERED 7' CEILING</text>
<text x="1683.2" y="1168.1" font-size="14.4" font-weight="400" text-anchor="start" fill="#111" textLength="116.5" lengthAdjust="spacingAndGlyphs">AT BED ALCOVE</text>
<text x="1682.6" y="1241.0" font-size="14.4" font-weight="400" text-anchor="start" fill="#111" textLength="56.9" lengthAdjust="spacingAndGlyphs">CROWN</text>
<text x="1682.6" y="1259.0" font-size="14.4" font-weight="400" text-anchor="start" fill="#111" textLength="67.9" lengthAdjust="spacingAndGlyphs">MOLDING</text>
<text x="1678.8" y="953.6" font-size="14.4" font-weight="400" text-anchor="start" fill="#111" textLength="154.8" lengthAdjust="spacingAndGlyphs">GYP BD CEILING, TYP</text>
<text x="1374.5" y="975.4" font-size="14.4" font-weight="400" text-anchor="start" fill="#111" textLength="74.0" lengthAdjust="spacingAndGlyphs">MASONRY</text>
<text x="1374.5" y="993.5" font-size="14.4" font-weight="400" text-anchor="start" fill="#111" textLength="68.0" lengthAdjust="spacingAndGlyphs">CHIMNEY</text>
<text x="1942.8" y="888.0" font-size="18.8" font-weight="400" text-anchor="start" fill="#111" textLength="110.5" lengthAdjust="spacingAndGlyphs">STAIR HALL</text>
<text x="1962.0" y="907.4" font-size="14.6" font-weight="400" text-anchor="start" fill="#111" textLength="73.0" lengthAdjust="spacingAndGlyphs">9' CEILING</text>
<text x="1953.6" y="931.6" font-size="14.4" font-weight="400" text-anchor="start" fill="#111" textLength="91.1" lengthAdjust="spacingAndGlyphs">BEADBOARD</text>
<text x="1970.6" y="950.0" font-size="14.4" font-weight="400" text-anchor="start" fill="#111" textLength="57.6" lengthAdjust="spacingAndGlyphs">CEILING</text>
<text x="1907.4" y="1138.5" font-size="14.4" font-weight="400" text-anchor="start" fill="#111" textLength="128.1" lengthAdjust="spacingAndGlyphs">INSULATED ATTIC</text>
<text x="1908.5" y="1156.1" font-size="14.4" font-weight="400" text-anchor="start" fill="#111" textLength="108.4" lengthAdjust="spacingAndGlyphs">ACCESS DOOR</text>
<text x="1950.5" y="1241.0" font-size="14.4" font-weight="400" text-anchor="start" fill="#111" textLength="56.9" lengthAdjust="spacingAndGlyphs">CROWN</text>
<text x="1950.5" y="1259.0" font-size="14.4" font-weight="400" text-anchor="start" fill="#111" textLength="67.9" lengthAdjust="spacingAndGlyphs">MOLDING</text>
<text x="2238.5" y="1138.1" font-size="19.3" font-weight="400" text-anchor="start" fill="#111" textLength="100.3" lengthAdjust="spacingAndGlyphs">BEDROOM</text>
<text x="2252.3" y="1158.2" font-size="14.6" font-weight="400" text-anchor="start" fill="#111" textLength="73.4" lengthAdjust="spacingAndGlyphs">9' CEILING</text>
<text x="2233.9" y="881.6" font-size="19.3" font-weight="400" text-anchor="start" fill="#111" textLength="113.2" lengthAdjust="spacingAndGlyphs">BATHROOM</text>
<text x="2253.6" y="901.8" font-size="14.6" font-weight="400" text-anchor="start" fill="#111" textLength="73.8" lengthAdjust="spacingAndGlyphs">9' CEILING</text>
<text x="2264.2" y="963.5" font-size="10.4" font-weight="400" text-anchor="start" fill="#222" textLength="50.8" lengthAdjust="spacingAndGlyphs">TANKLESS</text>
<text x="2264.2" y="977.3" font-size="10.4" font-weight="400" text-anchor="start" fill="#222" textLength="77.7" lengthAdjust="spacingAndGlyphs">WATER HEATER</text>
<text x="2217.5" y="977.3" font-size="10.4" font-weight="400" text-anchor="start" fill="#222" textLength="23.0" lengthAdjust="spacingAndGlyphs">GFCI</text>
<text x="2358.9" y="1041.7" font-size="14.4" font-weight="400" text-anchor="start" fill="#111" textLength="56.5" lengthAdjust="spacingAndGlyphs">CROWN</text>
<text x="2358.9" y="1059.4" font-size="14.4" font-weight="400" text-anchor="start" fill="#111" textLength="67.9" lengthAdjust="spacingAndGlyphs">MOLDING</text>
<text x="2559.1" y="948.8" font-size="15" font-weight="400" text-anchor="start" fill="#111" textLength="104.7" lengthAdjust="spacingAndGlyphs">EAVE RETURN</text>
<text x="1993.0" y="1367.0" font-size="14.4" font-weight="400" text-anchor="start" fill="#111" textLength="53.5" lengthAdjust="spacingAndGlyphs">FASCIA</text>
<text x="2177.4" y="1367.0" font-size="14.4" font-weight="400" text-anchor="start" fill="#111" textLength="105.1" lengthAdjust="spacingAndGlyphs">SOFFIT PANEL</text>
<path d="M2168.6 837.4L2454.4 840V1298.400H1548.600V843" stroke="#f5821f" stroke-width="6.2" fill="none" stroke-linejoin="miter"/>
<circle cx="1548.5" cy="841.3" r="8" fill="#7fe9f0" fill-opacity="0.92"/>
<circle cx="2454.3" cy="839.6" r="8" fill="#7fe9f0" fill-opacity="0.92"/>
<circle cx="2454.3" cy="1298.4" r="8" fill="#7fe9f0" fill-opacity="0.92"/>
<circle cx="1548.5" cy="1298.4" r="8" fill="#7fe9f0" fill-opacity="0.92"/>
<text x="1986.9" y="1014.6" font-size="19.8" font-weight="700" text-anchor="start" fill="#f5821f" textLength="96.2" lengthAdjust="spacingAndGlyphs">Insulation</text>
<text x="1996.3" y="1041.3" font-size="19.8" font-weight="700" text-anchor="start" fill="#f5821f" textLength="78.3" lengthAdjust="spacingAndGlyphs">1419.0 ft</text>
<path d="M1070 838H2988M2168.600 471V1827" stroke="#6b6b6b" stroke-width="1.6"/>
<rect x="2160.800" y="830" width="15.800" height="15.600" fill="#fff" fill-opacity="0.75" stroke="#777" stroke-width="1.3"/>
<path d="M2162 837.6H2168" stroke="#222" stroke-width="2"/><path d="M2168.600 837.4H2176.600" stroke="#f5821f" stroke-width="5"/></g></svg>
<svg class="i" style="left:1714.5px;top:189.8px;color:#434a57;" width="24" height="24" viewBox="0 0 24 24" fill="none" stroke="currentColor" stroke-width="2.10" stroke-linecap="round" stroke-linejoin="round"><path d="M12 3H5a2 2 0 0 0-2 2v14a2 2 0 0 0 2 2h14a2 2 0 0 0 2-2v-7"/><path d="M18.375 2.625a1 1 0 0 1 3 3l-9.013 9.014a2 2 0 0 1-.853.505l-2.873.84a.5.5 0 0 1-.62-.62l.84-2.873a2 2 0 0 1 .506-.852z"/></svg>
<svg class="i" style="left:1907.2px;top:191.5px;color:#434a57;" width="22" height="22" viewBox="0 0 24 24" fill="none" stroke="currentColor" stroke-width="2.18" stroke-linecap="round" stroke-linejoin="round"><path d="M4.5 12h15M12 4.5v15"/></svg>
<svg class="i" style="left:2111.0px;top:191.5px;color:#434a57;" width="22" height="22" viewBox="0 0 24 24" fill="none" stroke="currentColor" stroke-width="2.18" stroke-linecap="round" stroke-linejoin="round"><path d="M4.5 12h15M12 4.5v15"/></svg>
<svg class="i" style="left:2330.2px;top:191.5px;color:#434a57;" width="22" height="22" viewBox="0 0 24 24" fill="none" stroke="currentColor" stroke-width="2.18" stroke-linecap="round" stroke-linejoin="round"><path d="M4.5 12h15M12 4.5v15"/></svg>
<svg class="i" style="left:2479.5px;top:191.5px;color:#434a57;" width="22" height="22" viewBox="0 0 24 24" fill="none" stroke="currentColor" stroke-width="2.18" stroke-linecap="round" stroke-linejoin="round"><path d="M4.5 12h15M12 4.5v15"/></svg>
<svg class="i" style="left:2649.2px;top:191.5px;color:#434a57;" width="22" height="22" viewBox="0 0 24 24" fill="none" stroke="currentColor" stroke-width="2.18" stroke-linecap="round" stroke-linejoin="round"><path d="M4.5 12h15M12 4.5v15"/></svg>
<svg class="i" style="left:2856.0px;top:191.5px;color:#434a57;" width="22" height="22" viewBox="0 0 24 24" fill="none" stroke="currentColor" stroke-width="2.18" stroke-linecap="round" stroke-linejoin="round"><path d="M4.5 12h15M12 4.5v15"/></svg>
<svg class="i" style="left:3000.7px;top:326.7px;color:#2b3140;" width="24" height="24" viewBox="0 0 24 24" fill="none" stroke="currentColor" stroke-width="2.20" stroke-linecap="round" stroke-linejoin="round"><path d="M3 12a9 9 0 1 0 9-9 9.750 9.750 0 0 0-6.740 2.740L3 8"/><path d="M3 3v5h5"/><path d="M12 7v5l4 2"/></svg>
<svg class="i" style="left:151.5px;top:415.5px;color:#434a57;" width="21" height="21" viewBox="0 0 24 24" fill="none" stroke="currentColor" stroke-width="2.17" stroke-linecap="round" stroke-linejoin="round"><path d="M1.5 12s3.6-7.2 10.5-7.2S22.500 12 22.500 12s-3.600 7.200-10.500 7.200S1.500 12 1.500 12Z"/><circle cx="12" cy="12" r="3.2"/></svg>
<svg class="i" style="left:230.7px;top:412.9px;color:#2f3542;" width="25.5" height="25.5" viewBox="0 0 24 24" fill="none" stroke="currentColor" stroke-width="1.98" stroke-linecap="round" stroke-linejoin="round"><path d="M4 14h6v6M20 10h-6V4M14 10l7-7M3 21l7-7"/></svg>
<svg class="i" style="left:318.4px;top:412.9px;color:#2f3542;" width="25.5" height="25.5" viewBox="0 0 24 24" fill="none" stroke="currentColor" stroke-width="1.98" stroke-linecap="round" stroke-linejoin="round"><path d="M15 3h6v6M9 21H3v-6M21 3l-7 7M3 21l7-7"/></svg>
<svg class="i" style="left:394.8px;top:411.2px;color:#9aa0ab;" width="30" height="30" viewBox="0 0 24 24" fill="none" stroke="currentColor" stroke-width="1.84" stroke-linecap="round" stroke-linejoin="round"><circle cx="10.8" cy="10.8" r="8.3"/><path d="m22 22-5.200-5.200"/></svg>
<svg class="i" style="left:1002.4px;top:411.8px;color:#434a57;" width="28" height="28" viewBox="0 0 24 24" fill="none" stroke="currentColor" stroke-width="1.97" stroke-linecap="round" stroke-linejoin="round"><rect x="1.500" y="1.500" width="21" height="21" rx="3"/><path d="M9.300 1.500v21M17.300 16.300 13 12l4.300-4.300"/></svg>
<svg class="i" style="left:1105.6px;top:410.6px;color:#434a57;" width="28" height="28" viewBox="0 0 24 24" fill="none" stroke="currentColor" stroke-width="1.89" stroke-linecap="round" stroke-linejoin="round"><rect x="5" y="0.800" width="18.400" height="18.400" rx="2.700"/><path d="M2.600 5.600A2.700 2.700 0 0 0 .8 8.200v12.300a2.700 2.700 0 0 0 2.700 2.700h12.300a2.700 2.700 0 0 0 2.500-1.700"/><path d="M9 10.200l5.200-4.600 5.200 4.600M10.600 9.200v5.600h7.200V9.200"/></svg>
<svg class="i" style="left:1270.8px;top:410.8px;color:#434a57;" width="28.5" height="28.5" viewBox="0 0 24 24" fill="none" stroke="currentColor" stroke-width="1.85" stroke-linecap="round" stroke-linejoin="round"><path d="M13 5H5a2.500 2.500 0 0 0-2.500 2.500V19.500A2.500 2.500 0 0 0 5 22h12.500a2.500 2.500 0 0 0 2.500-2.500V10"/><path d="M6 15l5.500-4.800L17 15M7.800 14v4.500h7.400V14"/><path d="M23 3.500h-7M18.500 1l-2.500 2.500L18.500 6"/></svg>
<svg class="i" style="left:1459.5px;top:413.5px;color:#434a57;" width="25" height="25" viewBox="0 0 24 24" fill="none" stroke="currentColor" stroke-width="2.11" stroke-linecap="round" stroke-linejoin="round"><path d="M8 3H5a2 2 0 0 0-2 2v3M21 8V5a2 2 0 0 0-2-2h-3M3 16v3a2 2 0 0 0 2 2h3M16 21h3a2 2 0 0 0 2-2v-3"/></svg>
<svg class="i" style="left:2130.4px;top:412.6px;color:#a3a8b1;" width="24" height="24" viewBox="0 0 24 24" fill="none" stroke="currentColor" stroke-width="1.90" stroke-linecap="round" stroke-linejoin="round"><circle cx="12" cy="4" r="2.600"/><circle cx="4" cy="12" r="2.600"/><circle cx="20" cy="12" r="2.600"/><circle cx="12" cy="20" r="2.600"/><path d="M9.600 5.200 5.800 10M6.600 12h10.800M18.200 14l-3.800 4.800"/></svg>
<svg class="i" style="left:2219.0px;top:413.6px;color:#a3a8b1;" width="22" height="22" viewBox="0 0 24 24" fill="none" stroke="currentColor" stroke-width="2.18" stroke-linecap="round" stroke-linejoin="round"><rect x="2.500" y="2.500" width="19" height="19" rx="2.500"/></svg>
<svg class="i" style="left:2316.4px;top:413.6px;color:#a3a8b1;" width="22" height="22" viewBox="0 0 24 24" fill="none" stroke="currentColor" stroke-width="2.18" stroke-linecap="round" stroke-linejoin="round"><path d="M4.5 12h15"/></svg>
<svg class="i" style="left:2404.0px;top:413.6px;color:#8fd9a8;" width="22" height="22" viewBox="0 0 24 24" fill="none" stroke="currentColor" stroke-width="2.18" stroke-linecap="round" stroke-linejoin="round"><path d="M4.5 12h15M12 4.5v15"/></svg>
<svg class="i" style="left:2507.6px;top:413.5px;color:#2b3140;" width="24" height="24" viewBox="0 0 24 24" fill="none" stroke="currentColor" stroke-width="2.20" stroke-linecap="round" stroke-linejoin="round"><path d="M3 6.500v6.500h6.500"/><path d="M21 17.500a9 9 0 0 0-9-9 9 9 0 0 0-6 2.300L3 13"/></svg>
<svg class="i" style="left:2595.6px;top:413.5px;color:#a3a8b1;" width="24" height="24" viewBox="0 0 24 24" fill="none" stroke="currentColor" stroke-width="2.00" stroke-linecap="round" stroke-linejoin="round"><path d="M21 6.500v6.500h-6.500"/><path d="M3 17.500a9 9 0 0 1 9-9 9 9 0 0 1 6 2.300l3 2.700"/></svg>
<svg class="i" style="left:2750.3px;top:412.3px;color:#ffffff;" width="26" height="26" viewBox="0 0 24 24" fill="none" stroke="currentColor" stroke-width="2.12" stroke-linecap="round" stroke-linejoin="round"><circle cx="12" cy="12" r="10"/><circle cx="12" cy="12" r="3.600"/></svg>
<svg class="i" style="left:3012.4px;top:493.9px;color:#434a57;" width="26.2" height="26.2" viewBox="0 0 24 24" fill="none" stroke="currentColor" stroke-width="1.83" stroke-linecap="round" stroke-linejoin="round"><path d="M12 2v20M15 19l-3 3-3-3M19 9l3 3-3 3M2 12h20M5 9l-3 3 3 3M9 5l3-3 3 3"/></svg>
<svg class="i" style="left:3012.4px;top:547.7px;color:#434a57;" width="26.2" height="26.2" viewBox="0 0 24 24" fill="none" stroke="currentColor" stroke-width="1.83" stroke-linecap="round" stroke-linejoin="round"><path d="M4.037 4.688a.495.495 0 0 1 .651-.651l16 6.500a.5.5 0 0 1-.063.947l-6.124 1.580a2 2 0 0 0-1.438 1.435l-1.579 6.126a.5.5 0 0 1-.947.063z"/></svg>
<svg class="i" style="left:3012.4px;top:618.7px;color:#434a57;" width="26.2" height="26.2" viewBox="0 0 24 24" fill="none" stroke="currentColor" stroke-width="1.83" stroke-linecap="round" stroke-linejoin="round"><circle cx="11" cy="11" r="8"/><path d="m21.500 21.500-4.800-4.800M11 7.500v7M7.500 11h7"/></svg>
<svg class="i" style="left:3012.4px;top:672.3px;color:#434a57;" width="26.2" height="26.2" viewBox="0 0 24 24" fill="none" stroke="currentColor" stroke-width="1.83" stroke-linecap="round" stroke-linejoin="round"><circle cx="11" cy="11" r="8"/><path d="m21.500 21.500-4.800-4.800M7.500 11h7"/></svg>
<svg class="i" style="left:3012.4px;top:744.4px;color:#434a57;" width="26.2" height="26.2" viewBox="0 0 24 24" fill="none" stroke="currentColor" stroke-width="1.83" stroke-linecap="round" stroke-linejoin="round"><path d="M13 21h8.500"/><path d="M16.376 3.622a1 1 0 0 1 3.002 3.002L7.368 18.635a2 2 0 0 1-.855.506l-2.872.838a.5.5 0 0 1-.62-.62l.838-2.872a2 2 0 0 1 .506-.854z"/><path d="m15 5 3 3"/></svg>
<svg class="i" style="left:3013.5px;top:799.5px;color:#434a57;" width="24.0" height="24.0" viewBox="0 0 24 24" fill="none" stroke="currentColor" stroke-width="2.00" stroke-linecap="round" stroke-linejoin="round"><path d="M3.500 7.500v-4h17v4M8.500 21h7M12 3.500V21"/></svg>
<svg class="i" style="left:3013.5px;top:853.3px;color:#434a57;" width="24.0" height="24.0" viewBox="0 0 24 24" fill="none" stroke="currentColor" stroke-width="2.00" stroke-linecap="round" stroke-linejoin="round"><path d="M8 4.500h11.500V16M4 20 19.500 4.500"/></svg>
<svg class="i" style="left:3012.9px;top:906.7px;color:#434a57;" width="25.1" height="25.1" viewBox="0 0 24 24" fill="none" stroke="currentColor" stroke-width="1.91" stroke-linecap="round" stroke-linejoin="round"><rect x="2.500" y="2.500" width="19" height="19" rx="2.500"/></svg>
<svg class="i" style="left:3012.9px;top:960.7px;color:#434a57;" width="25.1" height="25.1" viewBox="0 0 24 24" fill="none" stroke="currentColor" stroke-width="1.91" stroke-linecap="round" stroke-linejoin="round"><circle cx="12" cy="12" r="10.500"/></svg>
<svg class="i" style="left:3012.4px;top:1013.7px;color:#ffffff;" width="26.2" height="26.2" viewBox="0 0 24 24" fill="none" stroke="currentColor" stroke-width="1.74" stroke-linecap="round" stroke-linejoin="round"><circle cx="12" cy="4" r="2.600"/><circle cx="4" cy="12" r="2.600"/><circle cx="20" cy="12" r="2.600"/><circle cx="12" cy="20" r="2.600"/><path d="M9.600 5.200 5.800 10M6.600 12h10.800M18.200 14l-3.800 4.800"/></svg>
<svg class="i" style="left:3012.4px;top:1067.9px;color:#434a57;" width="26.2" height="26.2" viewBox="0 0 24 24" fill="none" stroke="currentColor" stroke-width="1.83" stroke-linecap="round" stroke-linejoin="round"><circle cx="12" cy="12" r="10"/><path d="M12 6v6.500l4.200 2"/></svg>
<svg class="i" style="left:3011.3px;top:1134.8px;color:#434a57;" width="28.3" height="28.3" viewBox="0 0 24 24" fill="none" stroke="currentColor" stroke-width="1.70" stroke-linecap="round" stroke-linejoin="round"><path d="M21 3 3 21"/></svg>
<svg class="i" style="left:3012.4px;top:1196.4px;color:#434a57;" width="26.2" height="26.2" viewBox="0 0 24 24" fill="none" stroke="currentColor" stroke-width="1.83" stroke-linecap="round" stroke-linejoin="round"><path d="M12 22a7 7 0 0 0 7-7c0-2-1-3.900-3-5.500s-3.500-4-4-6.500c-.5 2.500-2 4.900-4 6.500C6 11.100 5 13 5 15a7 7 0 0 0 7 7z"/></svg>
<svg class="i" style="left:2755.8px;top:1859.0px;color:#434a57;" width="26" height="26" viewBox="0 0 24 24" fill="none" stroke="currentColor" stroke-width="1.85" stroke-linecap="round" stroke-linejoin="round"><path d="M21.300 15.300a2.400 2.400 0 0 1 0 3.400l-2.600 2.600a2.400 2.400 0 0 1-3.400 0L2.700 8.700a2.410 2.410 0 0 1 0-3.400l2.600-2.600a2.410 2.410 0 0 1 3.400 0Z"/><path d="m14.500 12.500 2-2M11.500 9.500l2-2M8.500 6.500l2-2M17.500 15.500l2-2"/></svg>
<svg class="i" style="left:1007.7px;top:493.4px;color:#9aa0ab;" width="23" height="23" viewBox="0 0 24 24" fill="none" stroke="currentColor" stroke-width="1.77" stroke-linecap="round" stroke-linejoin="round"><path d="M12 1.500v21M6.500 17l5.500 5.500 5.500-5.500M6.500 7l5.500-5.500 5.500 5.500"/></svg>
<svg class="i" style="left:1041.3px;top:494.4px;color:#9aa0ab;" width="21" height="21" viewBox="0 0 24 24" fill="none" stroke="currentColor" stroke-width="1.14" stroke-linecap="round" stroke-linejoin="round"><circle cx="12" cy="3.500" r="2.200" fill="currentColor" stroke="none"/><circle cx="12" cy="12" r="2.200" fill="currentColor" stroke="none"/><circle cx="12" cy="20.500" r="2.200" fill="currentColor" stroke="none"/></svg>
<svg class="i" style="left:276.8px;top:495.6px;color:#2f3542;" width="19" height="19" viewBox="0 0 24 24" fill="none" stroke="currentColor" stroke-width="2.53" stroke-linecap="round" stroke-linejoin="round"><path d="m4 8 8 8 8-8"/></svg>
<svg class="i" style="left:1007.7px;top:555.1px;color:#9aa0ab;" width="23" height="23" viewBox="0 0 24 24" fill="none" stroke="currentColor" stroke-width="1.77" stroke-linecap="round" stroke-linejoin="round"><path d="M12 1.500v21M6.500 17l5.500 5.500 5.500-5.500M6.500 7l5.500-5.500 5.500 5.500"/></svg>
<svg class="i" style="left:1041.3px;top:556.1px;color:#9aa0ab;" width="21" height="21" viewBox="0 0 24 24" fill="none" stroke="currentColor" stroke-width="1.14" stroke-linecap="round" stroke-linejoin="round"><circle cx="12" cy="3.500" r="2.200" fill="currentColor" stroke="none"/><circle cx="12" cy="12" r="2.200" fill="currentColor" stroke="none"/><circle cx="12" cy="20.500" r="2.200" fill="currentColor" stroke="none"/></svg>
<svg class="i" style="left:1007.7px;top:609.3px;color:#9aa0ab;" width="23" height="23" viewBox="0 0 24 24" fill="none" stroke="currentColor" stroke-width="1.77" stroke-linecap="round" stroke-linejoin="round"><path d="M12 1.500v21M6.500 17l5.500 5.500 5.500-5.500M6.500 7l5.500-5.500 5.500 5.500"/></svg>
<svg class="i" style="left:1041.3px;top:610.3px;color:#9aa0ab;" width="21" height="21" viewBox="0 0 24 24" fill="none" stroke="currentColor" stroke-width="1.14" stroke-linecap="round" stroke-linejoin="round"><circle cx="12" cy="3.500" r="2.200" fill="currentColor" stroke="none"/><circle cx="12" cy="12" r="2.200" fill="currentColor" stroke="none"/><circle cx="12" cy="20.500" r="2.200" fill="currentColor" stroke="none"/></svg>
<svg class="i" style="left:1007.7px;top:663.4px;color:#9aa0ab;" width="23" height="23" viewBox="0 0 24 24" fill="none" stroke="currentColor" stroke-width="1.77" stroke-linecap="round" stroke-linejoin="round"><path d="M12 1.500v21M6.500 17l5.500 5.500 5.500-5.500M6.500 7l5.500-5.500 5.500 5.500"/></svg>
<svg class="i" style="left:1041.3px;top:664.4px;color:#9aa0ab;" width="21" height="21" viewBox="0 0 24 24" fill="none" stroke="currentColor" stroke-width="1.14" stroke-linecap="round" stroke-linejoin="round"><circle cx="12" cy="3.500" r="2.200" fill="currentColor" stroke="none"/><circle cx="12" cy="12" r="2.200" fill="currentColor" stroke="none"/><circle cx="12" cy="20.500" r="2.200" fill="currentColor" stroke="none"/></svg>
<svg class="i" style="left:277.0px;top:719.2px;color:#1ea4c4;" width="19" height="19" viewBox="0 0 24 24" fill="none" stroke="currentColor" stroke-width="2.53" stroke-linecap="round" stroke-linejoin="round"><path d="M4.5 12h15M12 4.5v15"/></svg>
<svg class="i" style="left:1007.7px;top:778.8px;color:#9aa0ab;" width="23" height="23" viewBox="0 0 24 24" fill="none" stroke="currentColor" stroke-width="1.77" stroke-linecap="round" stroke-linejoin="round"><path d="M12 1.500v21M6.500 17l5.500 5.500 5.500-5.500M6.500 7l5.500-5.500 5.500 5.500"/></svg>
<svg class="i" style="left:1041.3px;top:779.8px;color:#9aa0ab;" width="21" height="21" viewBox="0 0 24 24" fill="none" stroke="currentColor" stroke-width="1.14" stroke-linecap="round" stroke-linejoin="round"><circle cx="12" cy="3.500" r="2.200" fill="currentColor" stroke="none"/><circle cx="12" cy="12" r="2.200" fill="currentColor" stroke="none"/><circle cx="12" cy="20.500" r="2.200" fill="currentColor" stroke="none"/></svg>
<svg class="i" style="left:276.8px;top:781.0px;color:#2f3542;" width="19" height="19" viewBox="0 0 24 24" fill="none" stroke="currentColor" stroke-width="2.53" stroke-linecap="round" stroke-linejoin="round"><path d="m4 8 8 8 8-8"/></svg>
<svg class="i" style="left:1007.7px;top:840.5px;color:#9aa0ab;" width="23" height="23" viewBox="0 0 24 24" fill="none" stroke="currentColor" stroke-width="1.77" stroke-linecap="round" stroke-linejoin="round"><path d="M12 1.500v21M6.500 17l5.500 5.500 5.500-5.500M6.500 7l5.500-5.500 5.500 5.500"/></svg>
<svg class="i" style="left:1041.3px;top:841.5px;color:#9aa0ab;" width="21" height="21" viewBox="0 0 24 24" fill="none" stroke="currentColor" stroke-width="1.14" stroke-linecap="round" stroke-linejoin="round"><circle cx="12" cy="3.500" r="2.200" fill="currentColor" stroke="none"/><circle cx="12" cy="12" r="2.200" fill="currentColor" stroke="none"/><circle cx="12" cy="20.500" r="2.200" fill="currentColor" stroke="none"/></svg>
<svg class="i" style="left:277.0px;top:896.7px;color:#1ea4c4;" width="19" height="19" viewBox="0 0 24 24" fill="none" stroke="currentColor" stroke-width="2.53" stroke-linecap="round" stroke-linejoin="round"><path d="M4.5 12h15M12 4.5v15"/></svg>
<svg class="i" style="left:1007.7px;top:956.5px;color:#9aa0ab;" width="23" height="23" viewBox="0 0 24 24" fill="none" stroke="currentColor" stroke-width="1.77" stroke-linecap="round" stroke-linejoin="round"><path d="M12 1.500v21M6.500 17l5.500 5.500 5.500-5.500M6.500 7l5.500-5.500 5.500 5.500"/></svg>
<svg class="i" style="left:1041.3px;top:957.5px;color:#9aa0ab;" width="21" height="21" viewBox="0 0 24 24" fill="none" stroke="currentColor" stroke-width="1.14" stroke-linecap="round" stroke-linejoin="round"><circle cx="12" cy="3.500" r="2.200" fill="currentColor" stroke="none"/><circle cx="12" cy="12" r="2.200" fill="currentColor" stroke="none"/><circle cx="12" cy="20.500" r="2.200" fill="currentColor" stroke="none"/></svg>
<svg class="i" style="left:276.8px;top:958.7px;color:#2f3542;" width="19" height="19" viewBox="0 0 24 24" fill="none" stroke="currentColor" stroke-width="2.53" stroke-linecap="round" stroke-linejoin="round"><path d="m4 8 8 8 8-8"/></svg>
<svg class="i" style="left:1007.7px;top:1018.0px;color:#9aa0ab;" width="23" height="23" viewBox="0 0 24 24" fill="none" stroke="currentColor" stroke-width="1.77" stroke-linecap="round" stroke-linejoin="round"><path d="M12 1.500v21M6.500 17l5.500 5.500 5.500-5.500M6.500 7l5.500-5.500 5.500 5.500"/></svg>
<svg class="i" style="left:1041.3px;top:1019.0px;color:#9aa0ab;" width="21" height="21" viewBox="0 0 24 24" fill="none" stroke="currentColor" stroke-width="1.14" stroke-linecap="round" stroke-linejoin="round"><circle cx="12" cy="3.500" r="2.200" fill="currentColor" stroke="none"/><circle cx="12" cy="12" r="2.200" fill="currentColor" stroke="none"/><circle cx="12" cy="20.500" r="2.200" fill="currentColor" stroke="none"/></svg>
<svg class="i" style="left:1007.7px;top:1072.2px;color:#9aa0ab;" width="23" height="23" viewBox="0 0 24 24" fill="none" stroke="currentColor" stroke-width="1.77" stroke-linecap="round" stroke-linejoin="round"><path d="M12 1.500v21M6.500 17l5.500 5.500 5.500-5.500M6.500 7l5.500-5.500 5.500 5.500"/></svg>
<svg class="i" style="left:1041.3px;top:1073.2px;color:#9aa0ab;" width="21" height="21" viewBox="0 0 24 24" fill="none" stroke="currentColor" stroke-width="1.14" stroke-linecap="round" stroke-linejoin="round"><circle cx="12" cy="3.500" r="2.200" fill="currentColor" stroke="none"/><circle cx="12" cy="12" r="2.200" fill="currentColor" stroke="none"/><circle cx="12" cy="20.500" r="2.200" fill="currentColor" stroke="none"/></svg>
<svg class="i" style="left:277.0px;top:1128.1px;color:#1ea4c4;" width="19" height="19" viewBox="0 0 24 24" fill="none" stroke="currentColor" stroke-width="2.53" stroke-linecap="round" stroke-linejoin="round"><path d="M4.5 12h15M12 4.5v15"/></svg>
<svg class="i" style="left:1007.7px;top:1187.8px;color:#9aa0ab;" width="23" height="23" viewBox="0 0 24 24" fill="none" stroke="currentColor" stroke-width="1.77" stroke-linecap="round" stroke-linejoin="round"><path d="M12 1.500v21M6.500 17l5.500 5.500 5.500-5.500M6.500 7l5.500-5.500 5.500 5.500"/></svg>
<svg class="i" style="left:1041.3px;top:1188.8px;color:#9aa0ab;" width="21" height="21" viewBox="0 0 24 24" fill="none" stroke="currentColor" stroke-width="1.14" stroke-linecap="round" stroke-linejoin="round"><circle cx="12" cy="3.500" r="2.200" fill="currentColor" stroke="none"/><circle cx="12" cy="12" r="2.200" fill="currentColor" stroke="none"/><circle cx="12" cy="20.500" r="2.200" fill="currentColor" stroke="none"/></svg>
<svg class="i" style="left:276.8px;top:1190.0px;color:#2f3542;" width="19" height="19" viewBox="0 0 24 24" fill="none" stroke="currentColor" stroke-width="2.53" stroke-linecap="round" stroke-linejoin="round"><path d="m4 8 8 8 8-8"/></svg>
<svg class="i" style="left:1007.7px;top:1249.2px;color:#9aa0ab;" width="23" height="23" viewBox="0 0 24 24" fill="none" stroke="currentColor" stroke-width="1.77" stroke-linecap="round" stroke-linejoin="round"><path d="M12 1.500v21M6.500 17l5.500 5.500 5.500-5.500M6.500 7l5.500-5.500 5.500 5.500"/></svg>
<svg class="i" style="left:1041.3px;top:1250.2px;color:#9aa0ab;" width="21" height="21" viewBox="0 0 24 24" fill="none" stroke="currentColor" stroke-width="1.14" stroke-linecap="round" stroke-linejoin="round"><circle cx="12" cy="3.500" r="2.200" fill="currentColor" stroke="none"/><circle cx="12" cy="12" r="2.200" fill="currentColor" stroke="none"/><circle cx="12" cy="20.500" r="2.200" fill="currentColor" stroke="none"/></svg>
<svg class="i" style="left:277.0px;top:1359.8px;color:#1ea4c4;" width="19" height="19" viewBox="0 0 24 24" fill="none" stroke="currentColor" stroke-width="2.53" stroke-linecap="round" stroke-linejoin="round"><path d="M4.5 12h15M12 4.5v15"/></svg>
<svg class="i" style="left:294.0px;top:844.0px;color:#2f3542;" width="16" height="16" viewBox="0 0 24 24" fill="none" stroke="currentColor" stroke-width="3.00" stroke-linecap="round" stroke-linejoin="round"><path d="m8 4 8 8-8 8"/></svg>
<svg class="i" style="left:294.0px;top:1021.5px;color:#2f3542;" width="16" height="16" viewBox="0 0 24 24" fill="none" stroke="currentColor" stroke-width="3.00" stroke-linecap="round" stroke-linejoin="round"><path d="m8 4 8 8-8 8"/></svg>
<svg class="i" style="left:294.0px;top:1075.6px;color:#2f3542;" width="16" height="16" viewBox="0 0 24 24" fill="none" stroke="currentColor" stroke-width="3.00" stroke-linecap="round" stroke-linejoin="round"><path d="m8 4 8 8-8 8"/></svg>
<svg class="i" style="left:293.5px;top:1253.2px;color:#2f3542;" width="16" height="16" viewBox="0 0 24 24" fill="none" stroke="currentColor" stroke-width="3.00" stroke-linecap="round" stroke-linejoin="round"><path d="m4 8 8 8 8-8"/></svg>
<svg class="i" style="left:215.7px;top:492.9px;color:#3a404d;" width="23.5" height="23.5" viewBox="0 0 24 24" fill="none" stroke="currentColor" stroke-width="2.20" stroke-linecap="round" stroke-linejoin="round"><path d="M8.500 3.500H3.500v17h17M12.500 3.500h5M20.500 11v6"/><circle cx="20" cy="3.800" r="3.300" fill="currentColor" stroke="none"/><path d="M20 6l0 2.500" /></svg>
<svg class="i" style="left:215.6px;top:779.1px;color:#3a404d;" width="23.4" height="23.4" viewBox="0 0 24 24" fill="none" stroke="currentColor" stroke-width="2.05" stroke-linecap="round" stroke-linejoin="round"><path d="M12 1.500 2.500 7v10L12 22.500l4-2.300M12 1.500 20 6.200M2.500 7 12 12.500l4-2.400M12 12.500v5M19 18.400l2-1.300v-2.600"/><circle cx="21" cy="7" r="3.300" fill="currentColor" stroke="none"/><path d="M21 9.500v2.500"/></svg>
<svg class="i" style="left:216.5px;top:956.0px;color:#3a404d;" width="25" height="25" viewBox="0 0 24 24" fill="none" stroke="currentColor" stroke-width="1.92" stroke-linecap="round" stroke-linejoin="round"><path d="M1.700 24.400V9.800L10.800 1v4.100M10.800 9.200v5.200M11.600 15.600 7.900 19.100M5.500 21.400 1.700 24.800M14.300 12.700l3.200-2.900M18.900 6.200l2.600-1.800"/><circle cx="23" cy="3.500" r="3.200" fill="currentColor" stroke="none"/></svg>
<svg class="i" style="left:216.5px;top:1187.1px;color:#3a404d;" width="25" height="25" viewBox="0 0 24 24" fill="none" stroke="currentColor" stroke-width="1.92" stroke-linecap="round" stroke-linejoin="round"><path d="M1.700 24.400V9.800L10.800 1v4.100M10.800 9.200v5.200M11.600 15.600 7.900 19.100M5.500 21.400 1.700 24.800M14.300 12.700l3.200-2.900M18.900 6.200l2.600-1.800"/><circle cx="23" cy="3.500" r="3.200" fill="currentColor" stroke="none"/></svg>
<svg class="i" style="left:295.0px;top:1424.0px;color:#ffffff;" width="19" height="19" viewBox="0 0 24 24" fill="none" stroke="currentColor" stroke-width="2.78" stroke-linecap="round" stroke-linejoin="round"><path d="M4.5 12h15M12 4.5v15"/></svg>
<span class="t" style="left:165.9px;top:187.9px;font-size:25.5px;line-height:25.5px;font-weight:700;color:#1ea4c4;letter-spacing:0.279px;">VILLARREAL RESIDENCE / 124 MAIN ST</span>
<span class="t" style="left:165.9px;top:220.0px;font-size:45.5px;line-height:45.5px;font-weight:700;color:#3c4350;letter-spacing:1.233px;-webkit-text-stroke:1.1px #3c4350;">Job 5498</span>
<span class="t" style="left:1746.0px;top:189.1px;font-size:26px;line-height:26px;font-weight:400;color:#3f4653;letter-spacing:0.478px;">Edit Job</span>
<span class="t" style="left:1939.6px;top:189.1px;font-size:26px;line-height:26px;font-weight:400;color:#3f4653;letter-spacing:0.150px;">Message</span>
<span class="t" style="left:2142.7px;top:189.1px;font-size:26px;line-height:26px;font-weight:400;color:#3f4653;letter-spacing:0.643px;">Document</span>
<span class="t" style="left:2362.4px;top:189.1px;font-size:26px;line-height:26px;font-weight:400;color:#3f4653;letter-spacing:0.044px;">Task</span>
<span class="t" style="left:2511.7px;top:189.1px;font-size:26px;line-height:26px;font-weight:400;color:#3f4653;letter-spacing:1.160px;">To-Do</span>
<span class="t" style="left:2681.0px;top:189.1px;font-size:26px;line-height:26px;font-weight:400;color:#3f4653;letter-spacing:0.249px;">Daily Log</span>
<span class="t" style="left:2887.5px;top:189.1px;font-size:26px;line-height:26px;font-weight:400;color:#3f4653;letter-spacing:0.342px;">Time Entry</span>
<span class="t" style="left:172.6px;top:325.7px;font-size:26px;line-height:26px;font-weight:700;color:#1c2230;letter-spacing:0.448px;">Dashboard</span>
<span class="t" style="left:390.0px;top:325.7px;font-size:26px;line-height:26px;font-weight:700;color:#1c2230;letter-spacing:0.491px;">Budget</span>
<span class="t" style="left:560.0px;top:325.7px;font-size:26px;line-height:26px;font-weight:700;color:#1c2230;letter-spacing:0.031px;">Plans</span>
<span class="t" style="left:707.0px;top:325.7px;font-size:26px;line-height:26px;font-weight:700;color:#1c2230;letter-spacing:0.527px;">Messages</span>
<span class="t" style="left:913.0px;top:325.7px;font-size:26px;line-height:26px;font-weight:700;color:#1c2230;letter-spacing:0.478px;">Documents</span>
<span class="t" style="left:1136.0px;top:325.7px;font-size:26px;line-height:26px;font-weight:700;color:#1c2230;letter-spacing:0.438px;">Selections</span>
<span class="t" style="left:1348.5px;top:325.7px;font-size:26px;line-height:26px;font-weight:700;color:#1c2230;letter-spacing:0.358px;">Schedule</span>
<span class="t" style="left:1545.0px;top:325.7px;font-size:26px;line-height:26px;font-weight:700;color:#1c2230;letter-spacing:0.615px;">To-Dos</span>
<span class="t" style="left:1713.6px;top:325.7px;font-size:26px;line-height:26px;font-weight:700;color:#1c2230;letter-spacing:0.024px;">Daily Logs</span>
<span class="t" style="left:1922.5px;top:325.7px;font-size:26px;line-height:26px;font-weight:700;color:#1c2230;letter-spacing:0.927px;">Time</span>
<span class="t" style="left:2062.0px;top:325.7px;font-size:26px;line-height:26px;font-weight:700;color:#1c2230;letter-spacing:-0.062px;">Files</span>
<span class="t" style="left:2199.0px;top:325.7px;font-size:26px;line-height:26px;font-weight:700;color:#1c2230;letter-spacing:0.375px;">Reports</span>
<span class="t" style="left:435.0px;top:412.7px;font-size:26px;line-height:26px;font-weight:400;color:#9ca3af;letter-spacing:-0.178px;">Search</span>
<span class="t" style="left:1142.5px;top:412.4px;font-size:26px;line-height:26px;font-weight:400;color:#3f4653;letter-spacing:-0.950px;">Pla...</span>
<span class="t" style="left:1301.6px;top:412.4px;font-size:26px;line-height:26px;font-weight:400;color:#3f4653;letter-spacing:-0.904px;">Rec...</span>
<span class="t" style="left:1494.6px;top:412.4px;font-size:26px;line-height:26px;font-weight:400;color:#3f4653;letter-spacing:-0.069px;">Fullscre...</span>
<span class="t" style="left:2784.3px;top:412.1px;font-size:26px;line-height:26px;font-weight:400;color:#ffffff;letter-spacing:0.469px;-webkit-text-stroke:0.5px #fff;">Stop Measuring</span>
<span class="t" style="left:312.2px;top:491.8px;font-size:26px;line-height:26px;font-weight:700;color:#3a414e;letter-spacing:-0.098px;">Flooring</span>
<span class="t" style="left:888.0px;top:491.7px;font-size:26.5px;line-height:26.5px;font-weight:400;color:#3f4653;letter-spacing:0.456px;">475.5 ft</span>
<span class="t" style="left:980.2px;top:489.1px;font-size:19px;line-height:19px;font-weight:400;color:#3f4653;letter-spacing:0.000px;">2</span>
<span class="t" style="left:289.4px;top:553.5px;font-size:26px;line-height:26px;font-weight:400;color:#3f4653;letter-spacing:0.254px;">Tile</span>
<span class="t" style="left:906.6px;top:553.4px;font-size:26.5px;line-height:26.5px;font-weight:400;color:#3f4653;letter-spacing:-0.112px;">14.7 ft</span>
<span class="t" style="left:980.2px;top:550.8px;font-size:19px;line-height:19px;font-weight:400;color:#3f4653;letter-spacing:0.000px;">2</span>
<span class="t" style="left:289.4px;top:607.7px;font-size:26px;line-height:26px;font-weight:400;color:#3f4653;letter-spacing:0.291px;">Carpet</span>
<span class="t" style="left:903.3px;top:607.6px;font-size:26.5px;line-height:26.5px;font-weight:400;color:#3f4653;letter-spacing:0.438px;">36.7 ft</span>
<span class="t" style="left:980.2px;top:605.0px;font-size:19px;line-height:19px;font-weight:400;color:#3f4653;letter-spacing:0.000px;">2</span>
<span class="t" style="left:289.4px;top:661.8px;font-size:26px;line-height:26px;font-weight:400;color:#3f4653;letter-spacing:0.498px;">Hardwood</span>
<span class="t" style="left:886.4px;top:661.7px;font-size:26.5px;line-height:26.5px;font-weight:400;color:#3f4653;letter-spacing:0.685px;">424.2 ft</span>
<span class="t" style="left:980.2px;top:659.1px;font-size:19px;line-height:19px;font-weight:400;color:#3f4653;letter-spacing:0.000px;">2</span>
<span class="t" style="left:307.6px;top:715.8px;font-size:26px;line-height:26px;font-weight:400;color:#1ea4c4;letter-spacing:0.363px;">Measurement</span>
<span class="t" style="left:312.2px;top:777.2px;font-size:26px;line-height:26px;font-weight:700;color:#3a414e;letter-spacing:0.227px;">Gravel Driveway &amp; Parking</span>
<span class="t" style="left:878.6px;top:777.1px;font-size:26.5px;line-height:26.5px;font-weight:400;color:#3f4653;letter-spacing:0.116px;">104.5 cy</span>
<span class="t" style="left:980.2px;top:774.6px;font-size:19px;line-height:19px;font-weight:400;color:#3f4653;letter-spacing:0.000px;">3</span>
<span class="t" style="left:324.2px;top:838.9px;font-size:26px;line-height:26px;font-weight:400;color:#3f4653;letter-spacing:-0.156px;">Gravel</span>
<span class="t" style="left:878.6px;top:838.8px;font-size:26.5px;line-height:26.5px;font-weight:400;color:#3f4653;letter-spacing:0.116px;">104.5 cy</span>
<span class="t" style="left:980.2px;top:836.2px;font-size:19px;line-height:19px;font-weight:400;color:#3f4653;letter-spacing:0.000px;">3</span>
<span class="t" style="left:307.6px;top:893.3px;font-size:26px;line-height:26px;font-weight:400;color:#1ea4c4;letter-spacing:0.363px;">Measurement</span>
<span class="t" style="left:312.2px;top:954.8px;font-size:26px;line-height:26px;font-weight:700;color:#3a414e;letter-spacing:0.417px;">Drywall</span>
<span class="t" style="left:885.9px;top:954.7px;font-size:26.5px;line-height:26.5px;font-weight:400;color:#3f4653;letter-spacing:0.756px;">599.6 ft</span>
<span class="t" style="left:980.2px;top:952.2px;font-size:19px;line-height:19px;font-weight:400;color:#3f4653;letter-spacing:0.000px;">2</span>
<span class="t" style="left:324.2px;top:1016.4px;font-size:26px;line-height:26px;font-weight:400;color:#3f4653;letter-spacing:0.376px;">Guest Bedroom</span>
<span class="t" style="left:887.5px;top:1016.3px;font-size:26.5px;line-height:26.5px;font-weight:400;color:#3f4653;letter-spacing:0.528px;">262.7 ft</span>
<span class="t" style="left:980.2px;top:1013.7px;font-size:19px;line-height:19px;font-weight:400;color:#3f4653;letter-spacing:0.000px;">2</span>
<span class="t" style="left:324.2px;top:1070.5px;font-size:26px;line-height:26px;font-weight:400;color:#3f4653;letter-spacing:0.387px;">Primary Bedroom</span>
<span class="t" style="left:885.5px;top:1070.4px;font-size:26.5px;line-height:26.5px;font-weight:400;color:#3f4653;letter-spacing:0.813px;">336.9 ft</span>
<span class="t" style="left:980.2px;top:1067.9px;font-size:19px;line-height:19px;font-weight:400;color:#3f4653;letter-spacing:0.000px;">2</span>
<span class="t" style="left:307.6px;top:1124.7px;font-size:26px;line-height:26px;font-weight:400;color:#1ea4c4;letter-spacing:0.363px;">Measurement</span>
<span class="t" style="left:312.2px;top:1186.1px;font-size:26px;line-height:26px;font-weight:700;color:#3a414e;letter-spacing:0.247px;">Insulation</span>
<span class="t" style="left:892.8px;top:1186.0px;font-size:26.5px;line-height:26.5px;font-weight:400;color:#3f4653;letter-spacing:-0.229px;">1,419 ft</span>
<span class="t" style="left:980.2px;top:1183.5px;font-size:19px;line-height:19px;font-weight:400;color:#3f4653;letter-spacing:0.000px;">2</span>
<span class="t" style="left:324.2px;top:1247.6px;font-size:26px;line-height:26px;font-weight:400;color:#3f4653;letter-spacing:0.387px;">Insulation</span>
<span class="t" style="left:892.8px;top:1247.5px;font-size:26.5px;line-height:26.5px;font-weight:400;color:#3f4653;letter-spacing:-0.229px;">1,419 ft</span>
<span class="t" style="left:980.2px;top:1245.0px;font-size:19px;line-height:19px;font-weight:400;color:#3f4653;letter-spacing:0.000px;">2</span>
<span class="t" style="left:307.6px;top:1356.4px;font-size:26px;line-height:26px;font-weight:400;color:#1ea4c4;letter-spacing:0.363px;">Measurement</span>
<span class="t" style="left:511.6px;top:1304.3px;font-size:23px;line-height:23px;font-weight:400;color:#3f4653;letter-spacing:0.403px;">Height</span>
<span class="t" style="left:608.9px;top:1304.3px;font-size:23px;line-height:23px;font-weight:400;color:#3f4653;letter-spacing:-0.989px;">19.0</span>
<span class="t" style="left:671.0px;top:1304.3px;font-size:23px;line-height:23px;font-weight:400;color:#3f4653;letter-spacing:2.219px;">ft</span>
<span class="t" style="left:325.0px;top:1420.8px;font-size:26px;line-height:26px;font-weight:400;color:#ffffff;letter-spacing:0.226px;-webkit-text-stroke:0.4px #fff;">Parameter</span>
<span class="t" style="left:517.3px;top:1429.0px;font-size:22.5px;line-height:22.5px;font-weight:400;color:#aeb4be;letter-spacing:0.413px;">space</span>
<span class="t" style="left:704.0px;top:1420.8px;font-size:26px;line-height:26px;font-weight:400;color:#3f4653;letter-spacing:0.282px;">+ Catalog Parameters</span>
<span class="t" style="left:1107.5px;top:1859.0px;font-size:26px;line-height:26px;font-weight:400;color:#3f4653;letter-spacing:0.000px;">v1</span>
<span class="t" style="left:1183.0px;top:1858.1px;font-size:27px;line-height:27px;font-weight:700;color:#3f4654;letter-spacing:0.233px;">Permitted Plans 12-1-24_10</span>
<span class="t" style="left:2789.6px;top:1857.9px;font-size:26px;line-height:26px;font-weight:400;color:#3f4653;letter-spacing:-0.210px;">Ruler</span>
<span class="t" style="left:2907.6px;top:1858.3px;font-size:26px;line-height:26px;font-weight:700;color:#3f4654;letter-spacing:-0.473px;">1/4&quot; = 1&#x27;-0&quot;</span>
<span class="t" style="left:1661.0px;top:412.4px;font-size:26px;line-height:26px;font-weight:400;color:#f47f1f;letter-spacing:0.387px;">Measuring</span>
<span class="t" style="left:1794.2px;top:412.4px;font-size:26px;line-height:26px;font-weight:700;color:#f47f1f;letter-spacing:0.335px;">Insulation</span>
<span class="t" style="left:1929.0px;top:412.4px;font-size:26px;line-height:26px;font-weight:400;color:#f47f1f;letter-spacing:0.478px;">for</span>
<span class="t" style="left:1969.0px;top:412.4px;font-size:26px;line-height:26px;font-weight:700;color:#f47f1f;letter-spacing:0.092px;">Insulat...</span>
<div class="b" style="left:3046px;top:1904px;width:16px;height:10px;background:linear-gradient(135deg,transparent 50%,#c9cdd3 50%);"></div>
</div>
</body></html>
